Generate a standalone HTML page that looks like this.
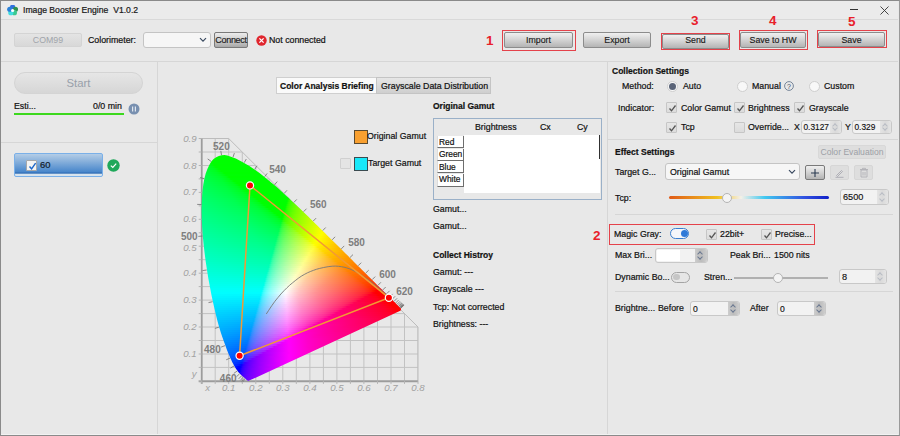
<!DOCTYPE html>
<html><head><meta charset="utf-8">
<style>
*{box-sizing:border-box;margin:0;padding:0}
html,body{width:900px;height:436px;overflow:hidden;background:#e8e8e8;font-family:"Liberation Sans",sans-serif;color:#1e1e1e}
.a{position:absolute}
.t{position:absolute;font-size:8.8px;line-height:12px;white-space:nowrap;color:#111;-webkit-text-stroke:0.2px #111}
.b{font-weight:bold;font-size:8.5px}
.btn{position:absolute;border:1px solid #8c8c8c;border-radius:2px;background:linear-gradient(#f0f0f0,#d6d6d6 45%,#b4b4b4);text-align:center;font-size:8.8px;line-height:14px;color:#1a1a1a;-webkit-text-stroke:0.15px #1a1a1a}
.red{position:absolute;border:1px solid #e4424a}
.num{position:absolute;color:#e8202a;font-weight:bold;font-size:13.5px;line-height:12px}
.cb{position:absolute;width:11px;height:11px;border:1px solid #c6c6c6;border-radius:1px;background:linear-gradient(#e6e6e6,#dcdcdc)}
.cb svg{position:absolute;left:1px;top:1px}
.rad{position:absolute;width:11px;height:11px;border-radius:50%;border:1px solid #cfcfcf;background:#f8f8f8}
.spin{position:absolute;border:1px solid #c8c8c8;border-radius:3px;background:#f2f2f2;font-size:8.6px;line-height:13px;padding-left:2px;color:#111;-webkit-text-stroke:0.15px #111}
.spin i{position:absolute;right:0;top:0;bottom:0;width:11px;background:linear-gradient(90deg,#cdcdcd,#bcbcbc 50%,#cdcdcd);border-radius:0 2px 2px 0}
.spin i:before,.spin i:after{content:"";position:absolute;left:3px;width:3px;height:3px;border:solid #6a7890;border-width:1px 0 0 1px}
.spin i:before{top:3px;transform:rotate(45deg)}
.spin i:after{bottom:3px;transform:rotate(225deg)}
.spin.dis i{background:linear-gradient(90deg,#e4e4e4,#dadada 50%,#e4e4e4)}
.spin.dis i:before,.spin.dis i:after{border-color:#b8bcc4}
.sep{position:absolute;background:#d6d6d6}
</style></head><body>
<!-- window border -->
<div class="a" style="left:0;top:0;width:900px;height:436px;border:1px solid #8a8a8a;border-right-color:#9a9a9a"></div>
<div class="a" style="left:1px;top:1px;width:897px;height:18px;background:#ebebeb"></div>
<div class="sep" style="left:1px;top:19px;width:897px;height:1px;background:#d9d9d9"></div>
<!-- title icon -->
<svg class="a" style="left:7px;top:5px" width="11" height="11" viewBox="0 0 11 11"><circle cx="5.60" cy="2.20" r="2.6" fill="#2f6fe0"/><circle cx="8.45" cy="4.27" r="2.6" fill="#2e9050"/><circle cx="7.36" cy="7.63" r="2.6" fill="#3cc890"/><circle cx="3.84" cy="7.63" r="2.6" fill="#40dce0"/><circle cx="2.75" cy="4.27" r="2.6" fill="#2a80d8"/><circle cx="5.6" cy="5.5" r="1.6" fill="#fff"/></svg>
<div class="t" style="left:23px;top:4px;font-size:8.65px;color:#222">Image Booster Engine&nbsp;&nbsp;V1.0.2</div>
<!-- window controls -->
<div class="a" style="left:850px;top:9px;width:8px;height:1.2px;background:#333"></div>
<svg class="a" style="left:880px;top:6px" width="9" height="9" viewBox="0 0 9 9"><path d="M0.5 0.5L8.5 8.5M8.5 0.5L0.5 8.5" stroke="#333" stroke-width="0.9"/></svg>

<!-- toolbar -->
<div class="a" style="left:14px;top:33px;width:68px;height:14px;border-radius:2px;background:linear-gradient(#e4e4e4,#d8d8d8);border:1px solid #d4d4d4;color:#a0a4aa;font-size:8.8px;line-height:12px;text-align:center">COM99</div>
<div class="t" style="left:88px;top:34px">Colorimeter:</div>
<div class="a" style="left:143px;top:32px;width:68px;height:16px;border:1px solid #c4c4c4;border-radius:3px;background:#f6f6f6"></div>
<svg class="a" style="left:199px;top:37px" width="8" height="6" viewBox="0 0 8 6"><path d="M1 1.2L4 4.2L7 1.2" stroke="#3a4a60" stroke-width="1.2" fill="none"/></svg>
<div class="btn" style="left:214px;top:32px;width:34px;height:16px;line-height:14px;font-size:9px;letter-spacing:-0.3px;border-color:#7a7a7a;background:linear-gradient(#ececec,#c8c8c8 60%,#a8a8a8)">Connect</div>
<svg class="a" style="left:256px;top:35px" width="11" height="11" viewBox="0 0 11 11"><circle cx="5.5" cy="5.5" r="5.2" fill="#e0262e"/><path d="M3.4 3.4L7.6 7.6M7.6 3.4L3.4 7.6" stroke="#fff" stroke-width="1.3"/></svg>
<div class="t" style="left:269px;top:34px">Not connected</div>

<div class="num" style="left:486px;top:35px">1</div>
<div class="red" style="left:502px;top:30px;width:74px;height:21px"></div>
<div class="btn" style="left:504px;top:32px;width:69px;height:16px">Import</div>
<div class="btn" style="left:583px;top:32px;width:68px;height:16px">Export</div>
<div class="num" style="left:691px;top:15px">3</div>
<div class="btn" style="left:662px;top:34px;width:67px;height:15px;line-height:11px">Send</div>
<div class="red" style="left:661px;top:33px;width:69px;height:17px"></div>
<div class="num" style="left:769px;top:15px">4</div>
<div class="btn" style="left:740px;top:32px;width:66px;height:16px">Save to HW</div>
<div class="red" style="left:739px;top:30px;width:69px;height:20px"></div>
<div class="num" style="left:848px;top:16px">5</div>
<div class="btn" style="left:818px;top:32px;width:67px;height:15px">Save</div>
<div class="red" style="left:817px;top:30px;width:70px;height:18px"></div>

<div class="sep" style="left:1px;top:61px;width:897px;height:1px"></div>
<div class="sep" style="left:157px;top:62px;width:1px;height:373px"></div>
<div class="sep" style="left:607px;top:62px;width:1px;height:373px"></div>
<div class="a" style="left:1px;top:434px;width:897px;height:1px;background:#f2f2f2"></div>

<!-- left panel -->
<div class="a" style="left:14px;top:72px;width:129px;height:22px;border-radius:11px;border:1px solid #d4d4d4;background:linear-gradient(#e6e6e6,#d6d6d6);color:#98a0aa;font-size:11.3px;line-height:20px;text-align:center">Start</div>
<div class="t" style="left:14px;top:100px">Esti...</div>
<div class="t" style="left:93px;top:100px">0/0 min</div>
<div class="a" style="left:14px;top:113px;width:110px;height:2px;background:#3cd81e"></div>
<svg class="a" style="left:128px;top:103px" width="12" height="12" viewBox="0 0 12 12"><circle cx="6" cy="6" r="5.5" fill="#7890b0"/><path d="M4.6 3.6V8.4M7.4 3.6V8.4" stroke="#dfe6ee" stroke-width="1.2"/></svg>
<div class="sep" style="left:1px;top:142px;width:156px;height:1px"></div>
<div class="a" style="left:14px;top:153px;width:89px;height:24px;border:1px solid #7ab0e8;border-radius:2px;background:linear-gradient(#b4cde6,#4a88cc 80%,#2c6ab4 88%,#d8e4ee 90%)"></div>
<div class="cb" style="left:26px;top:160px;width:11px;height:11px;background:#f4f4f4;border-color:#a8a8a8"><svg width="9" height="9" viewBox="0 0 9 9"><path d="M1.5 4.5L3.6 6.8L7.6 1.2" stroke="#1c66c8" stroke-width="1.4" fill="none"/></svg></div>
<div class="t" style="left:40px;top:159px;font-size:9.4px;color:#102030">60</div>
<svg class="a" style="left:107px;top:159px" width="13" height="13" viewBox="0 0 13 13"><circle cx="6.5" cy="6.5" r="6.2" fill="#1fa85a"/><path d="M3.8 6.6L5.8 8.5L9.2 4.6" stroke="#fff" stroke-width="1.2" fill="none"/></svg>

<!-- tabs -->
<div class="a" style="left:276px;top:77px;width:101px;height:17px;background:#fafafa;border:1px solid #cfcfcf"></div>
<div class="t b" style="left:280px;top:80px">Color Analysis Briefing</div>
<div class="a" style="left:376px;top:77px;width:115px;height:17px;background:linear-gradient(#e6e6e6,#cfcfcf);border:1px solid #c4c4c4"></div>
<div class="t" style="left:381px;top:80px">Grayscale Data Distribution</div>

<!-- legend -->
<div class="a" style="left:354px;top:130px;width:14px;height:14px;background:#f9a030;border:1px solid #5a4a30"></div>
<div class="t" style="left:367px;top:130px">Original Gamut</div>
<div class="cb" style="left:340px;top:158px;width:11px;height:11px;border-color:#d0d0d0;background:#e4e4e4"></div>
<div class="a" style="left:354px;top:157px;width:14px;height:14px;background:#18e8f8;border:1px solid #3a4a50"></div>
<div class="t" style="left:368px;top:157px">Target Gamut</div>

<!-- original gamut table -->
<div class="t b" style="left:433px;top:100px">Original Gamut</div>
<div class="a" style="left:433px;top:118px;width:169px;height:82px;border:1px solid #9ab0c8;background:#e8e8e8"></div>
<div class="t" style="left:475px;top:121px">Brightness</div>
<div class="t" style="left:540px;top:121px">Cx</div>
<div class="t" style="left:577px;top:121px">Cy</div>
<div class="a" style="left:464px;top:135px;width:136px;height:58px;background:#fff"></div>
<div class="a" style="left:599px;top:135px;width:1px;height:24px;background:#303030"></div>
<div class="a" style="left:437px;top:136px;width:27px;height:12px;background:#fff;border:1px solid #dcdcdc;border-bottom-color:#6e6e6e;border-right-color:#6e6e6e;border-top:0"></div>
<div class="a" style="left:437px;top:148.5px;width:27px;height:12px;background:#fff;border:1px solid #dcdcdc;border-bottom-color:#6e6e6e;border-right-color:#6e6e6e;border-top:0"></div>
<div class="a" style="left:437px;top:161px;width:27px;height:12px;background:#fff;border:1px solid #dcdcdc;border-bottom-color:#6e6e6e;border-right-color:#6e6e6e;border-top:0"></div>
<div class="a" style="left:437px;top:174px;width:27px;height:12.5px;background:#fff;border:1px solid #dcdcdc;border-bottom-color:#6e6e6e;border-right-color:#6e6e6e;border-top:0"></div>
<div class="t" style="left:439px;top:136px;font-size:8.4px">Red</div>
<div class="t" style="left:439px;top:148px;font-size:8.4px">Green</div>
<div class="t" style="left:439px;top:161px;font-size:8.4px">Blue</div>
<div class="t" style="left:439px;top:173px;font-size:8.4px">White</div>

<div class="t" style="left:433px;top:203px">Gamut...</div>
<div class="t" style="left:433px;top:220px">Gamut...</div>
<div class="t b" style="left:433px;top:249px">Collect Histroy</div>
<div class="t" style="left:433px;top:266px">Gamut: ---</div>
<div class="t" style="left:433px;top:283px">Grayscale ---</div>
<div class="t" style="left:433px;top:301px">Tcp: Not corrected</div>
<div class="t" style="left:433px;top:318px">Brightness: ---</div>
<div class="num" style="left:593px;top:230px">2</div>

<!-- right panel: collection settings -->
<div class="t b" style="left:612px;top:65px">Collection Settings</div>
<div class="t" style="left:622px;top:80px">Method:</div>
<div class="rad" style="left:667px;top:81px"></div><div class="a" style="left:669px;top:83px;width:7px;height:7px;border-radius:50%;background:#5a6478"></div>
<div class="t" style="left:683px;top:80px">Auto</div>
<div class="rad" style="left:737px;top:81px"></div>
<div class="t" style="left:752px;top:80px">Manual</div>
<svg class="a" style="left:784px;top:81px" width="10" height="10" viewBox="0 0 10 10"><circle cx="5" cy="5" r="4.4" fill="none" stroke="#6a7a90" stroke-width="0.9"/><text x="5" y="7.6" font-size="7" text-anchor="middle" fill="#3a4a60" font-family="Liberation Sans">?</text></svg>
<div class="rad" style="left:809px;top:81px"></div>
<div class="t" style="left:824px;top:80px">Custom</div>

<div class="t" style="left:618px;top:102px">Indicator:</div>
<div class="cb" style="left:666px;top:102px"><svg width="9" height="9" viewBox="0 0 9 9"><path d="M1.5 4.5L3.5 6.8L7.5 1.5" stroke="#555" stroke-width="1.3" fill="none"/></svg></div>
<div class="t" style="left:681px;top:102px">Color Gamut</div>
<div class="cb" style="left:734px;top:102px"><svg width="9" height="9" viewBox="0 0 9 9"><path d="M1.5 4.5L3.5 6.8L7.5 1.5" stroke="#555" stroke-width="1.3" fill="none"/></svg></div>
<div class="t" style="left:748px;top:102px">Brightness</div>
<div class="cb" style="left:794px;top:102px"><svg width="9" height="9" viewBox="0 0 9 9"><path d="M1.5 4.5L3.5 6.8L7.5 1.5" stroke="#555" stroke-width="1.3" fill="none"/></svg></div>
<div class="t" style="left:809px;top:102px">Grayscale</div>
<div class="cb" style="left:666px;top:122px"><svg width="9" height="9" viewBox="0 0 9 9"><path d="M1.5 4.5L3.5 6.8L7.5 1.5" stroke="#555" stroke-width="1.3" fill="none"/></svg></div>
<div class="t" style="left:681px;top:121px">Tcp</div>
<div class="cb" style="left:734px;top:122px"></div>
<div class="t" style="left:748px;top:121px">Override...</div>
<div class="t" style="left:794px;top:121px">X</div>
<div class="spin dis" style="left:801px;top:120px;width:41px;height:14px;font-size:8.3px;padding-left:1.5px">0.3127<i></i></div>
<div class="t" style="left:845px;top:121px">Y</div>
<div class="spin dis" style="left:852px;top:120px;width:40px;height:14px;font-size:8.3px;padding-left:1.5px">0.329<i></i></div>
<div class="sep" style="left:608px;top:139px;width:290px;height:1px"></div>

<!-- effect settings -->
<div class="t b" style="left:615px;top:146px">Effect Settings</div>
<div class="a" style="left:818px;top:145px;width:68px;height:14px;border-radius:2px;background:#dedede;border:1px solid #d8d8d8;color:#9ca0a6;font-size:8.6px;line-height:12px;text-align:center">Color Evaluation</div>
<div class="t" style="left:615px;top:166px">Target G...</div>
<div class="a" style="left:665px;top:163px;width:135px;height:17px;border:1px solid #c4c4c4;border-radius:3px;background:#f6f6f6"></div>
<div class="t" style="left:670px;top:166px">Original Gamut</div>
<svg class="a" style="left:788px;top:169px" width="8" height="6" viewBox="0 0 8 6"><path d="M1 1.2L4 4.2L7 1.2" stroke="#3a4a60" stroke-width="1.2" fill="none"/></svg>
<div class="btn" style="left:805px;top:165px;width:20px;height:15px;border-color:#7a7a7a"></div>
<svg class="a" style="left:810px;top:168px" width="10" height="10" viewBox="0 0 10 10"><path d="M5 1V9M1 5H9" stroke="#2a3a50" stroke-width="1.1"/></svg>
<div class="a" style="left:830px;top:165px;width:19px;height:15px;border-radius:2px;background:#dedede;border:1px solid #d6d6d6"></div>
<svg class="a" style="left:834px;top:168px" width="11" height="10" viewBox="0 0 11 10"><path d="M2.5 7.5L7.5 2.5L8.5 3.5L3.5 8.5Z" fill="none" stroke="#a8a8b0" stroke-width="0.9"/><path d="M1.5 9.3H9.5" stroke="#a8a8b0" stroke-width="0.9"/></svg>
<div class="a" style="left:854px;top:165px;width:19px;height:15px;border-radius:2px;background:#dedede;border:1px solid #d6d6d6"></div>
<svg class="a" style="left:859px;top:167px" width="10" height="11" viewBox="0 0 10 11"><path d="M2 3H8V10H2Z M1 2.5H9 M3.5 2.5V1.3H6.5V2.5 M4 5V8.5M6 5V8.5" fill="none" stroke="#b0b0b6" stroke-width="0.9"/></svg>
<div class="t" style="left:615px;top:192px">Tcp:</div>
<div class="a" style="left:669px;top:196px;width:160px;height:3px;border-radius:2px;background:linear-gradient(90deg,#e05a18,#f0c020 30%,#f4f0e8 45%,#40c8f0 60%,#3050e0 85%,#1020c8)"></div>
<div class="a" style="left:722px;top:193px;width:10px;height:10px;border-radius:50%;background:#f4f4f4;border:1px solid #b4b4b4"></div>
<div class="spin dis" style="left:840px;top:189px;width:49px;height:16px;line-height:15px;font-size:9.2px">6500<i></i></div>
<div class="sep" style="left:615px;top:214px;width:278px;height:1px"></div>

<!-- magic gray -->
<div class="red" style="left:609px;top:224px;width:206px;height:21px"></div>
<div class="t" style="left:614px;top:228px">Magic Gray:</div>
<div class="a" style="left:670px;top:228px;width:19px;height:11px;border-radius:6px;border:1.5px solid #3a7fd0;background:#f4f6fa"></div>
<div class="a" style="left:680.5px;top:230px;width:7px;height:7px;border-radius:50%;background:#2f7ad8"></div>
<div class="cb" style="left:706px;top:229px"><svg width="9" height="9" viewBox="0 0 9 9"><path d="M1.5 4.5L3.5 6.8L7.5 1.5" stroke="#555" stroke-width="1.3" fill="none"/></svg></div>
<div class="t" style="left:720px;top:228px">22bit+</div>
<div class="cb" style="left:761px;top:229px"><svg width="9" height="9" viewBox="0 0 9 9"><path d="M1.5 4.5L3.5 6.8L7.5 1.5" stroke="#555" stroke-width="1.3" fill="none"/></svg></div>
<div class="t" style="left:775px;top:228px">Precise...</div>

<div class="t" style="left:615px;top:249px">Max Bri...</div>
<div class="spin" style="left:655px;top:248px;width:53px;height:15px;background:#f2f2f2"><i style="width:12px"></i></div>
<div class="a" style="left:657px;top:250px;width:23px;height:11px;background:#fff"></div>
<div class="t" style="left:730px;top:249px">Peak Bri...</div>
<div class="t" style="left:774px;top:249px">1500 nits</div>
<div class="t" style="left:615px;top:271px">Dynamic Bo...</div>
<div class="a" style="left:671px;top:271.5px;width:19px;height:11px;border-radius:6px;border:1.3px solid #a4a4a4;background:#e6e6e6"></div>
<div class="a" style="left:673.3px;top:273.5px;width:6.5px;height:6.5px;border-radius:50%;background:#c6c6c6"></div>
<div class="t" style="left:704px;top:271px">Stren...</div>
<div class="a" style="left:734px;top:277px;width:94px;height:2px;background:#b0b0b0"></div>
<div class="a" style="left:773px;top:273px;width:10px;height:10px;border-radius:50%;background:#f4f4f4;border:1px solid #b4b4b4"></div>
<div class="spin dis" style="left:839px;top:269px;width:48px;height:15px;line-height:14px;font-size:9.2px">8<i></i></div>
<div class="sep" style="left:615px;top:291px;width:278px;height:1px"></div>

<div class="t" style="left:615px;top:302px">Brightne...</div>
<div class="t" style="left:658px;top:302px">Before</div>
<div class="spin" style="left:690px;top:301px;width:50px;height:15px;line-height:14px">0<i></i></div>
<div class="t" style="left:750px;top:302px">After</div>
<div class="spin" style="left:777px;top:301px;width:49px;height:15px;line-height:14px">0<i></i></div>

<svg class="a" style="left:0;top:0" width="900" height="436" viewBox="0 0 900 436" font-family="Liberation Sans"><clipPath id="gclip"><path d="M201.7 380.9 L201.7 138.5 L228.7 138.5 L418 327 L418 380.9 Z"/></clipPath><g clip-path="url(#gclip)"><path d="M201.7 380.9V138.5M215.2 380.9V138.5M228.7 380.9V138.5M242.3 380.9V138.5M255.8 380.9V138.5M269.3 380.9V138.5M282.8 380.9V138.5M296.3 380.9V138.5M309.9 380.9V138.5M323.4 380.9V138.5M336.9 380.9V138.5M350.4 380.9V138.5M363.9 380.9V138.5M377.5 380.9V138.5M391 380.9V138.5M404.5 380.9V138.5M418 380.9V138.5M201.7 380.9H418M201.7 367.4H418M201.7 354H418M201.7 340.5H418M201.7 327H418M201.7 313.6H418M201.7 300.1H418M201.7 286.6H418M201.7 273.2H418M201.7 259.7H418M201.7 246.2H418M201.7 232.8H418M201.7 219.3H418M201.7 205.9H418M201.7 192.4H418M201.7 178.9H418M201.7 165.5H418M201.7 152H418M201.7 138.5H418" stroke="#c2c2c2" stroke-width="1" fill="none"/></g><path d="M201.7 380.9 L201.7 138.5 L228.7 138.5 L418 327 L418 380.9 Z" stroke="#bcbcbc" stroke-width="1" fill="none"/><path d="M201.7 383.9V138.5M198.7 381.4H418" stroke="#9c9c9c" stroke-width="1.7" fill="none"/><path d="M198.7 380.9H201.7M198.7 367.4H201.7M198.7 354H201.7M198.7 340.5H201.7M198.7 327H201.7M198.7 313.6H201.7M198.7 300.1H201.7M198.7 286.6H201.7M198.7 273.2H201.7M198.7 259.7H201.7M198.7 246.2H201.7M198.7 232.8H201.7M198.7 219.3H201.7M198.7 205.9H201.7M198.7 192.4H201.7M198.7 178.9H201.7M198.7 165.5H201.7M198.7 152H201.7M198.7 138.5H201.7M201.7 380.9V383.9M215.2 380.9V383.9M228.7 380.9V383.9M242.3 380.9V383.9M255.8 380.9V383.9M269.3 380.9V383.9M282.8 380.9V383.9M296.3 380.9V383.9M309.9 380.9V383.9M323.4 380.9V383.9M336.9 380.9V383.9M350.4 380.9V383.9M363.9 380.9V383.9M377.5 380.9V383.9M391 380.9V383.9M404.5 380.9V383.9M418 380.9V383.9" stroke="#b4b4b4" stroke-width="1" fill="none"/><g font-size="9.7" font-style="italic" fill="#a2a2a2"><text x="196.7" y="357" text-anchor="end">0.1</text><text x="196.7" y="330" text-anchor="end">0.2</text><text x="196.7" y="303.1" text-anchor="end">0.3</text><text x="196.7" y="276.2" text-anchor="end">0.4</text><text x="196.7" y="251.2" text-anchor="end">0.5</text><text x="196.7" y="222.3" text-anchor="end">0.6</text><text x="196.7" y="195.4" text-anchor="end">0.7</text><text x="196.7" y="168.5" text-anchor="end">0.8</text><text x="196.7" y="141.5" text-anchor="end">0.9</text><text x="196.7" y="376.9" text-anchor="end">y</text><text x="207.7" y="391.4" text-anchor="middle">x</text><text x="228.7" y="391.4" text-anchor="middle">0.1</text><text x="255.8" y="391.4" text-anchor="middle">0.2</text><text x="282.8" y="391.4" text-anchor="middle">0.3</text><text x="309.9" y="391.4" text-anchor="middle">0.4</text><text x="336.9" y="391.4" text-anchor="middle">0.5</text><text x="363.9" y="391.4" text-anchor="middle">0.6</text><text x="391" y="391.4" text-anchor="middle">0.7</text><text x="418" y="391.4" text-anchor="middle">0.8</text></g><defs><linearGradient id="r0" x1="216" x2="231" y1="0" y2="0" gradientUnits="userSpaceOnUse"><stop offset="0.000" stop-color="#00ff00"/><stop offset="1.000" stop-color="#00ff00"/></linearGradient><linearGradient id="r1" x1="213" x2="237" y1="0" y2="0" gradientUnits="userSpaceOnUse"><stop offset="0.000" stop-color="#00ff00"/><stop offset="1.000" stop-color="#00ff00"/></linearGradient><linearGradient id="r2" x1="210" x2="241" y1="0" y2="0" gradientUnits="userSpaceOnUse"><stop offset="0.000" stop-color="#00ff00"/><stop offset="1.000" stop-color="#00ff00"/></linearGradient><linearGradient id="r3" x1="209" x2="245" y1="0" y2="0" gradientUnits="userSpaceOnUse"><stop offset="0.000" stop-color="#00ff00"/><stop offset="1.000" stop-color="#00ff00"/></linearGradient><linearGradient id="r4" x1="207" x2="248" y1="0" y2="0" gradientUnits="userSpaceOnUse"><stop offset="0.000" stop-color="#00ff1a"/><stop offset="0.098" stop-color="#00ff01"/><stop offset="1.000" stop-color="#00ff00"/></linearGradient><linearGradient id="r5" x1="206" x2="252" y1="0" y2="0" gradientUnits="userSpaceOnUse"><stop offset="0.000" stop-color="#00ff25"/><stop offset="0.130" stop-color="#00ff0d"/><stop offset="0.174" stop-color="#00ff00"/><stop offset="1.000" stop-color="#00ff00"/></linearGradient><linearGradient id="r6" x1="205" x2="255" y1="0" y2="0" gradientUnits="userSpaceOnUse"><stop offset="0.000" stop-color="#00ff2e"/><stop offset="0.160" stop-color="#00ff16"/><stop offset="0.220" stop-color="#00ff01"/><stop offset="1.000" stop-color="#00ff00"/></linearGradient><linearGradient id="r7" x1="204" x2="258" y1="0" y2="0" gradientUnits="userSpaceOnUse"><stop offset="0.000" stop-color="#00ff36"/><stop offset="0.204" stop-color="#00ff19"/><stop offset="0.278" stop-color="#00ff00"/><stop offset="1.000" stop-color="#00ff00"/></linearGradient><linearGradient id="r8" x1="204" x2="260" y1="0" y2="0" gradientUnits="userSpaceOnUse"><stop offset="0.000" stop-color="#00ff3b"/><stop offset="0.214" stop-color="#00ff1f"/><stop offset="0.286" stop-color="#00ff0b"/><stop offset="0.304" stop-color="#00ff02"/><stop offset="1.000" stop-color="#00ff00"/></linearGradient><linearGradient id="r9" x1="203" x2="263" y1="0" y2="0" gradientUnits="userSpaceOnUse"><stop offset="0.000" stop-color="#00ff41"/><stop offset="0.233" stop-color="#00ff24"/><stop offset="0.317" stop-color="#00ff0f"/><stop offset="0.350" stop-color="#00ff00"/><stop offset="1.000" stop-color="#00ff00"/></linearGradient><linearGradient id="r10" x1="203" x2="266" y1="0" y2="0" gradientUnits="userSpaceOnUse"><stop offset="0.000" stop-color="#00ff45"/><stop offset="0.254" stop-color="#00ff26"/><stop offset="0.333" stop-color="#00ff12"/><stop offset="0.365" stop-color="#00ff03"/><stop offset="1.000" stop-color="#00ff00"/></linearGradient><linearGradient id="r11" x1="202" x2="268" y1="0" y2="0" gradientUnits="userSpaceOnUse"><stop offset="0.000" stop-color="#00ff4b"/><stop offset="0.273" stop-color="#00ff2b"/><stop offset="0.364" stop-color="#00ff16"/><stop offset="0.409" stop-color="#00ff00"/><stop offset="1.000" stop-color="#00ff00"/></linearGradient><linearGradient id="r12" x1="202" x2="271" y1="0" y2="0" gradientUnits="userSpaceOnUse"><stop offset="0.000" stop-color="#00ff4e"/><stop offset="0.275" stop-color="#00ff2f"/><stop offset="0.391" stop-color="#00ff13"/><stop offset="0.420" stop-color="#00ff03"/><stop offset="0.884" stop-color="#00ff00"/><stop offset="1.000" stop-color="#00ff00"/></linearGradient><linearGradient id="r13" x1="201" x2="273" y1="0" y2="0" gradientUnits="userSpaceOnUse"><stop offset="0.000" stop-color="#00ff53"/><stop offset="0.292" stop-color="#00ff33"/><stop offset="0.417" stop-color="#00ff16"/><stop offset="0.458" stop-color="#00ff00"/><stop offset="1.000" stop-color="#00ff00"/></linearGradient><linearGradient id="r14" x1="201" x2="276" y1="0" y2="0" gradientUnits="userSpaceOnUse"><stop offset="0.000" stop-color="#00ff57"/><stop offset="0.307" stop-color="#00ff35"/><stop offset="0.427" stop-color="#00ff19"/><stop offset="0.480" stop-color="#00ff00"/><stop offset="1.000" stop-color="#00ff00"/></linearGradient><linearGradient id="r15" x1="201" x2="278" y1="0" y2="0" gradientUnits="userSpaceOnUse"><stop offset="0.000" stop-color="#00ff5a"/><stop offset="0.312" stop-color="#00ff38"/><stop offset="0.442" stop-color="#00ff1c"/><stop offset="0.481" stop-color="#00ff09"/><stop offset="0.494" stop-color="#00ff00"/><stop offset="1.000" stop-color="#00ff00"/></linearGradient><linearGradient id="r16" x1="200" x2="280" y1="0" y2="0" gradientUnits="userSpaceOnUse"><stop offset="0.000" stop-color="#00ff5e"/><stop offset="0.325" stop-color="#00ff3c"/><stop offset="0.463" stop-color="#00ff1f"/><stop offset="0.500" stop-color="#00ff0e"/><stop offset="0.525" stop-color="#00ff00"/><stop offset="1.000" stop-color="#00ff00"/></linearGradient><linearGradient id="r17" x1="200" x2="282" y1="0" y2="0" gradientUnits="userSpaceOnUse"><stop offset="0.000" stop-color="#00ff61"/><stop offset="0.329" stop-color="#00ff3f"/><stop offset="0.476" stop-color="#00ff21"/><stop offset="0.524" stop-color="#00ff0a"/><stop offset="0.537" stop-color="#00ff00"/><stop offset="1.000" stop-color="#00ff00"/></linearGradient><linearGradient id="r18" x1="200" x2="285" y1="0" y2="0" gradientUnits="userSpaceOnUse"><stop offset="0.000" stop-color="#00ff64"/><stop offset="0.341" stop-color="#00ff41"/><stop offset="0.482" stop-color="#00ff23"/><stop offset="0.529" stop-color="#00ff0f"/><stop offset="0.553" stop-color="#00ff00"/><stop offset="1.000" stop-color="#00ff00"/></linearGradient><linearGradient id="r19" x1="200" x2="287" y1="0" y2="0" gradientUnits="userSpaceOnUse"><stop offset="0.000" stop-color="#00ff67"/><stop offset="0.345" stop-color="#00ff44"/><stop offset="0.494" stop-color="#00ff26"/><stop offset="0.540" stop-color="#00ff13"/><stop offset="0.563" stop-color="#00ff00"/><stop offset="1.000" stop-color="#00ff00"/></linearGradient><linearGradient id="r20" x1="200" x2="289" y1="0" y2="0" gradientUnits="userSpaceOnUse"><stop offset="0.000" stop-color="#00ff6a"/><stop offset="0.348" stop-color="#00ff47"/><stop offset="0.506" stop-color="#00ff28"/><stop offset="0.562" stop-color="#00ff10"/><stop offset="0.584" stop-color="#00ff00"/><stop offset="1.000" stop-color="#00ff00"/></linearGradient><linearGradient id="r21" x1="199" x2="291" y1="0" y2="0" gradientUnits="userSpaceOnUse"><stop offset="0.000" stop-color="#00ff6e"/><stop offset="0.359" stop-color="#00ff4a"/><stop offset="0.522" stop-color="#00ff2a"/><stop offset="0.576" stop-color="#00ff14"/><stop offset="0.598" stop-color="#00ff01"/><stop offset="0.967" stop-color="#00ff00"/><stop offset="0.989" stop-color="#28ff00"/><stop offset="1.000" stop-color="#35ff00"/></linearGradient><linearGradient id="r22" x1="199" x2="293" y1="0" y2="0" gradientUnits="userSpaceOnUse"><stop offset="0.000" stop-color="#00ff71"/><stop offset="0.362" stop-color="#00ff4e"/><stop offset="0.532" stop-color="#00ff2c"/><stop offset="0.596" stop-color="#00ff11"/><stop offset="0.617" stop-color="#00ff00"/><stop offset="0.947" stop-color="#01ff00"/><stop offset="0.957" stop-color="#20ff00"/><stop offset="0.979" stop-color="#3bff00"/><stop offset="1.000" stop-color="#4dff00"/></linearGradient><linearGradient id="r23" x1="199" x2="295" y1="0" y2="0" gradientUnits="userSpaceOnUse"><stop offset="0.000" stop-color="#00ff74"/><stop offset="0.365" stop-color="#00ff51"/><stop offset="0.531" stop-color="#00ff31"/><stop offset="0.604" stop-color="#00ff15"/><stop offset="0.625" stop-color="#00ff02"/><stop offset="0.917" stop-color="#00ff00"/><stop offset="0.938" stop-color="#2aff00"/><stop offset="0.969" stop-color="#4aff00"/><stop offset="1.000" stop-color="#5fff00"/></linearGradient><linearGradient id="r24" x1="199" x2="298" y1="0" y2="0" gradientUnits="userSpaceOnUse"><stop offset="0.000" stop-color="#00ff77"/><stop offset="0.364" stop-color="#00ff54"/><stop offset="0.535" stop-color="#00ff34"/><stop offset="0.606" stop-color="#00ff19"/><stop offset="0.636" stop-color="#00ff00"/><stop offset="0.879" stop-color="#00ff00"/><stop offset="0.889" stop-color="#06ff00"/><stop offset="0.899" stop-color="#23ff00"/><stop offset="0.919" stop-color="#3dff00"/><stop offset="0.970" stop-color="#63ff00"/><stop offset="1.000" stop-color="#73ff00"/></linearGradient><linearGradient id="r25" x1="199" x2="300" y1="0" y2="0" gradientUnits="userSpaceOnUse"><stop offset="0.000" stop-color="#00ff7a"/><stop offset="0.366" stop-color="#00ff56"/><stop offset="0.545" stop-color="#00ff36"/><stop offset="0.614" stop-color="#00ff1c"/><stop offset="0.644" stop-color="#00ff03"/><stop offset="0.861" stop-color="#00ff00"/><stop offset="0.871" stop-color="#1aff00"/><stop offset="0.891" stop-color="#39ff00"/><stop offset="0.941" stop-color="#61ff00"/><stop offset="1.000" stop-color="#80ff00"/></linearGradient><linearGradient id="r26" x1="199" x2="302" y1="0" y2="0" gradientUnits="userSpaceOnUse"><stop offset="0.000" stop-color="#00ff7c"/><stop offset="0.379" stop-color="#00ff58"/><stop offset="0.553" stop-color="#00ff38"/><stop offset="0.631" stop-color="#00ff1a"/><stop offset="0.660" stop-color="#00ff00"/><stop offset="0.835" stop-color="#00ff00"/><stop offset="0.845" stop-color="#0cff00"/><stop offset="0.854" stop-color="#26ff00"/><stop offset="0.883" stop-color="#48ff00"/><stop offset="0.951" stop-color="#75ff00"/><stop offset="1.000" stop-color="#8dff00"/></linearGradient><linearGradient id="r27" x1="199" x2="304" y1="0" y2="0" gradientUnits="userSpaceOnUse"><stop offset="0.000" stop-color="#00ff7f"/><stop offset="0.381" stop-color="#00ff5b"/><stop offset="0.562" stop-color="#00ff3a"/><stop offset="0.638" stop-color="#00ff1d"/><stop offset="0.657" stop-color="#00ff0f"/><stop offset="0.667" stop-color="#00ff03"/><stop offset="0.743" stop-color="#00ff00"/><stop offset="0.819" stop-color="#00ff00"/><stop offset="0.829" stop-color="#1dff00"/><stop offset="0.848" stop-color="#3bff00"/><stop offset="0.895" stop-color="#63ff00"/><stop offset="1.000" stop-color="#98ff00"/></linearGradient><linearGradient id="r28" x1="199" x2="306" y1="0" y2="0" gradientUnits="userSpaceOnUse"><stop offset="0.000" stop-color="#00ff82"/><stop offset="0.383" stop-color="#00ff5e"/><stop offset="0.570" stop-color="#00ff3c"/><stop offset="0.645" stop-color="#00ff21"/><stop offset="0.673" stop-color="#00ff0a"/><stop offset="0.682" stop-color="#00ff00"/><stop offset="0.794" stop-color="#00ff00"/><stop offset="0.813" stop-color="#28ff00"/><stop offset="0.841" stop-color="#4aff00"/><stop offset="0.907" stop-color="#77ff00"/><stop offset="1.000" stop-color="#a3ff00"/></linearGradient><linearGradient id="r29" x1="199" x2="308" y1="0" y2="0" gradientUnits="userSpaceOnUse"><stop offset="0.000" stop-color="#00ff85"/><stop offset="0.385" stop-color="#00ff61"/><stop offset="0.578" stop-color="#00ff3e"/><stop offset="0.651" stop-color="#00ff24"/><stop offset="0.679" stop-color="#00ff10"/><stop offset="0.688" stop-color="#00ff04"/><stop offset="0.716" stop-color="#00ff00"/><stop offset="0.780" stop-color="#00ff00"/><stop offset="0.789" stop-color="#20ff00"/><stop offset="0.807" stop-color="#3dff00"/><stop offset="0.853" stop-color="#65ff00"/><stop offset="0.954" stop-color="#9aff00"/><stop offset="1.000" stop-color="#aeff00"/></linearGradient><linearGradient id="r30" x1="199" x2="310" y1="0" y2="0" gradientUnits="userSpaceOnUse"><stop offset="0.000" stop-color="#00ff88"/><stop offset="0.387" stop-color="#00ff64"/><stop offset="0.577" stop-color="#00ff42"/><stop offset="0.658" stop-color="#00ff27"/><stop offset="0.685" stop-color="#00ff15"/><stop offset="0.703" stop-color="#00ff00"/><stop offset="0.757" stop-color="#00ff00"/><stop offset="0.775" stop-color="#2bff00"/><stop offset="0.802" stop-color="#4cff00"/><stop offset="0.865" stop-color="#7aff00"/><stop offset="1.000" stop-color="#b8ff00"/></linearGradient><linearGradient id="r31" x1="199" x2="312" y1="0" y2="0" gradientUnits="userSpaceOnUse"><stop offset="0.000" stop-color="#00ff8a"/><stop offset="0.389" stop-color="#00ff67"/><stop offset="0.584" stop-color="#00ff44"/><stop offset="0.673" stop-color="#00ff25"/><stop offset="0.699" stop-color="#00ff12"/><stop offset="0.708" stop-color="#00ff05"/><stop offset="0.726" stop-color="#00ff00"/><stop offset="0.743" stop-color="#02ff00"/><stop offset="0.752" stop-color="#23ff00"/><stop offset="0.770" stop-color="#3fff00"/><stop offset="0.814" stop-color="#67ff00"/><stop offset="0.912" stop-color="#9dff00"/><stop offset="1.000" stop-color="#c2ff00"/></linearGradient><linearGradient id="r32" x1="199" x2="314" y1="0" y2="0" gradientUnits="userSpaceOnUse"><stop offset="0.000" stop-color="#00ff8d"/><stop offset="0.391" stop-color="#00ff69"/><stop offset="0.591" stop-color="#00ff46"/><stop offset="0.678" stop-color="#00ff28"/><stop offset="0.704" stop-color="#00ff17"/><stop offset="0.722" stop-color="#00ff00"/><stop offset="0.739" stop-color="#2dff00"/><stop offset="0.765" stop-color="#4eff00"/><stop offset="0.826" stop-color="#7cff00"/><stop offset="0.957" stop-color="#bbff00"/><stop offset="1.000" stop-color="#ccff00"/></linearGradient><linearGradient id="r33" x1="199" x2="316" y1="0" y2="0" gradientUnits="userSpaceOnUse"><stop offset="0.000" stop-color="#00ff90"/><stop offset="0.393" stop-color="#00ff6c"/><stop offset="0.598" stop-color="#00ff48"/><stop offset="0.684" stop-color="#00ff2b"/><stop offset="0.701" stop-color="#00ff21"/><stop offset="0.709" stop-color="#08ff1b"/><stop offset="0.718" stop-color="#26ff13"/><stop offset="0.735" stop-color="#41ff00"/><stop offset="0.778" stop-color="#69ff00"/><stop offset="0.872" stop-color="#a0ff00"/><stop offset="1.000" stop-color="#d6ff00"/></linearGradient><linearGradient id="r34" x1="199" x2="318" y1="0" y2="0" gradientUnits="userSpaceOnUse"><stop offset="0.000" stop-color="#00ff92"/><stop offset="0.395" stop-color="#00ff6f"/><stop offset="0.597" stop-color="#00ff4c"/><stop offset="0.689" stop-color="#00ff2e"/><stop offset="0.697" stop-color="#1dff29"/><stop offset="0.714" stop-color="#3dff1f"/><stop offset="0.731" stop-color="#51ff0e"/><stop offset="0.739" stop-color="#59ff00"/><stop offset="0.807" stop-color="#88ff00"/><stop offset="0.950" stop-color="#ccff00"/><stop offset="1.000" stop-color="#e0ff00"/></linearGradient><linearGradient id="r35" x1="200" x2="320" y1="0" y2="0" gradientUnits="userSpaceOnUse"><stop offset="0.000" stop-color="#00ff95"/><stop offset="0.392" stop-color="#00ff72"/><stop offset="0.600" stop-color="#00ff4f"/><stop offset="0.667" stop-color="#00ff3b"/><stop offset="0.675" stop-color="#0eff38"/><stop offset="0.683" stop-color="#29ff34"/><stop offset="0.708" stop-color="#4dff28"/><stop offset="0.733" stop-color="#65ff14"/><stop offset="0.750" stop-color="#71ff00"/><stop offset="0.850" stop-color="#abff00"/><stop offset="1.000" stop-color="#eaff00"/></linearGradient><linearGradient id="r36" x1="200" x2="322" y1="0" y2="0" gradientUnits="userSpaceOnUse"><stop offset="0.000" stop-color="#00ff97"/><stop offset="0.393" stop-color="#00ff75"/><stop offset="0.607" stop-color="#00ff51"/><stop offset="0.656" stop-color="#00ff43"/><stop offset="0.664" stop-color="#20ff40"/><stop offset="0.680" stop-color="#3fff3a"/><stop offset="0.721" stop-color="#69ff26"/><stop offset="0.746" stop-color="#7bff10"/><stop offset="0.754" stop-color="#81ff01"/><stop offset="0.877" stop-color="#c1ff00"/><stop offset="1.000" stop-color="#f4ff00"/></linearGradient><linearGradient id="r37" x1="200" x2="324" y1="0" y2="0" gradientUnits="userSpaceOnUse"><stop offset="0.000" stop-color="#00ff9a"/><stop offset="0.395" stop-color="#00ff78"/><stop offset="0.605" stop-color="#00ff55"/><stop offset="0.637" stop-color="#00ff4d"/><stop offset="0.653" stop-color="#2bff48"/><stop offset="0.677" stop-color="#4fff40"/><stop offset="0.734" stop-color="#7fff24"/><stop offset="0.750" stop-color="#8aff16"/><stop offset="0.766" stop-color="#93ff00"/><stop offset="0.919" stop-color="#ddff00"/><stop offset="1.000" stop-color="#feff00"/></linearGradient><linearGradient id="r38" x1="200" x2="326" y1="0" y2="0" gradientUnits="userSpaceOnUse"><stop offset="0.000" stop-color="#00ff9d"/><stop offset="0.397" stop-color="#00ff7b"/><stop offset="0.611" stop-color="#00ff57"/><stop offset="0.627" stop-color="#00ff53"/><stop offset="0.635" stop-color="#23ff51"/><stop offset="0.651" stop-color="#41ff4d"/><stop offset="0.690" stop-color="#6bff3f"/><stop offset="0.746" stop-color="#92ff22"/><stop offset="0.762" stop-color="#9cff11"/><stop offset="0.770" stop-color="#a0ff02"/><stop offset="0.944" stop-color="#f2ff00"/><stop offset="0.984" stop-color="#fffc00"/><stop offset="1.000" stop-color="#fff600"/></linearGradient><linearGradient id="r39" x1="200" x2="328" y1="0" y2="0" gradientUnits="userSpaceOnUse"><stop offset="0.000" stop-color="#00ffa0"/><stop offset="0.398" stop-color="#00ff7e"/><stop offset="0.609" stop-color="#00ff5b"/><stop offset="0.625" stop-color="#2eff57"/><stop offset="0.648" stop-color="#52ff51"/><stop offset="0.703" stop-color="#82ff3f"/><stop offset="0.750" stop-color="#9fff26"/><stop offset="0.766" stop-color="#a8ff17"/><stop offset="0.781" stop-color="#b1ff00"/><stop offset="0.953" stop-color="#fffe00"/><stop offset="1.000" stop-color="#ffec00"/></linearGradient><linearGradient id="r40" x1="200" x2="330" y1="0" y2="0" gradientUnits="userSpaceOnUse"><stop offset="0.000" stop-color="#00ffa3"/><stop offset="0.400" stop-color="#00ff81"/><stop offset="0.592" stop-color="#00ff63"/><stop offset="0.600" stop-color="#03ff61"/><stop offset="0.608" stop-color="#26ff5f"/><stop offset="0.623" stop-color="#44ff5c"/><stop offset="0.662" stop-color="#6eff51"/><stop offset="0.738" stop-color="#a3ff33"/><stop offset="0.769" stop-color="#b4ff1d"/><stop offset="0.777" stop-color="#b8ff13"/><stop offset="0.785" stop-color="#bcff03"/><stop offset="0.931" stop-color="#fffe00"/><stop offset="1.000" stop-color="#ffe300"/></linearGradient><linearGradient id="r41" x1="200" x2="332" y1="0" y2="0" gradientUnits="userSpaceOnUse"><stop offset="0.000" stop-color="#00ffa5"/><stop offset="0.402" stop-color="#00ff84"/><stop offset="0.583" stop-color="#00ff68"/><stop offset="0.591" stop-color="#1cff67"/><stop offset="0.598" stop-color="#31ff65"/><stop offset="0.621" stop-color="#54ff60"/><stop offset="0.674" stop-color="#84ff52"/><stop offset="0.750" stop-color="#b4ff32"/><stop offset="0.780" stop-color="#c4ff19"/><stop offset="0.795" stop-color="#ccff00"/><stop offset="0.909" stop-color="#fffd00"/><stop offset="1.000" stop-color="#ffdb00"/></linearGradient><linearGradient id="r42" x1="201" x2="334" y1="0" y2="0" gradientUnits="userSpaceOnUse"><stop offset="0.000" stop-color="#00ffa8"/><stop offset="0.406" stop-color="#00ff86"/><stop offset="0.564" stop-color="#00ff6f"/><stop offset="0.571" stop-color="#0bff6d"/><stop offset="0.579" stop-color="#29ff6c"/><stop offset="0.594" stop-color="#46ff69"/><stop offset="0.632" stop-color="#70ff61"/><stop offset="0.714" stop-color="#abff47"/><stop offset="0.767" stop-color="#c8ff2c"/><stop offset="0.789" stop-color="#d3ff15"/><stop offset="0.797" stop-color="#d7ff04"/><stop offset="0.820" stop-color="#e2ff00"/><stop offset="0.887" stop-color="#fffc00"/><stop offset="1.000" stop-color="#ffd200"/></linearGradient><linearGradient id="r43" x1="201" x2="336" y1="0" y2="0" gradientUnits="userSpaceOnUse"><stop offset="0.000" stop-color="#00ffab"/><stop offset="0.407" stop-color="#00ff89"/><stop offset="0.556" stop-color="#00ff74"/><stop offset="0.563" stop-color="#20ff73"/><stop offset="0.578" stop-color="#41ff70"/><stop offset="0.607" stop-color="#67ff6a"/><stop offset="0.674" stop-color="#9cff59"/><stop offset="0.756" stop-color="#ccff39"/><stop offset="0.793" stop-color="#dfff1b"/><stop offset="0.807" stop-color="#e6ff00"/><stop offset="0.859" stop-color="#ffff00"/><stop offset="1.000" stop-color="#ffcb00"/></linearGradient><linearGradient id="r44" x1="201" x2="338" y1="0" y2="0" gradientUnits="userSpaceOnUse"><stop offset="0.000" stop-color="#00ffad"/><stop offset="0.409" stop-color="#00ff8d"/><stop offset="0.540" stop-color="#00ff7a"/><stop offset="0.547" stop-color="#11ff79"/><stop offset="0.555" stop-color="#2cff78"/><stop offset="0.569" stop-color="#49ff75"/><stop offset="0.606" stop-color="#73ff6e"/><stop offset="0.686" stop-color="#aeff5a"/><stop offset="0.766" stop-color="#dbff38"/><stop offset="0.796" stop-color="#eaff20"/><stop offset="0.803" stop-color="#eeff16"/><stop offset="0.810" stop-color="#f2ff06"/><stop offset="0.825" stop-color="#f9ff00"/><stop offset="0.854" stop-color="#fff700"/><stop offset="1.000" stop-color="#ffc300"/></linearGradient><linearGradient id="r45" x1="201" x2="340" y1="0" y2="0" gradientUnits="userSpaceOnUse"><stop offset="0.000" stop-color="#00ffb0"/><stop offset="0.410" stop-color="#00ff90"/><stop offset="0.532" stop-color="#00ff7f"/><stop offset="0.540" stop-color="#23ff7e"/><stop offset="0.554" stop-color="#44ff7c"/><stop offset="0.590" stop-color="#71ff75"/><stop offset="0.662" stop-color="#a9ff65"/><stop offset="0.755" stop-color="#dfff43"/><stop offset="0.799" stop-color="#f6ff25"/><stop offset="0.813" stop-color="#fdff11"/><stop offset="0.820" stop-color="#fffd00"/><stop offset="0.950" stop-color="#ffca00"/><stop offset="1.000" stop-color="#ffbc00"/></linearGradient><linearGradient id="r46" x1="201" x2="342" y1="0" y2="0" gradientUnits="userSpaceOnUse"><stop offset="0.000" stop-color="#00ffb3"/><stop offset="0.411" stop-color="#00ff93"/><stop offset="0.518" stop-color="#00ff85"/><stop offset="0.532" stop-color="#2fff83"/><stop offset="0.553" stop-color="#55ff80"/><stop offset="0.596" stop-color="#82ff78"/><stop offset="0.688" stop-color="#c3ff62"/><stop offset="0.773" stop-color="#f3ff3f"/><stop offset="0.801" stop-color="#fffc29"/><stop offset="0.816" stop-color="#fff517"/><stop offset="0.823" stop-color="#fff207"/><stop offset="0.830" stop-color="#ffef00"/><stop offset="0.979" stop-color="#ffba00"/><stop offset="1.000" stop-color="#ffb400"/></linearGradient><linearGradient id="r47" x1="202" x2="344" y1="0" y2="0" gradientUnits="userSpaceOnUse"><stop offset="0.000" stop-color="#00ffb6"/><stop offset="0.408" stop-color="#00ff97"/><stop offset="0.507" stop-color="#00ff8a"/><stop offset="0.514" stop-color="#27ff89"/><stop offset="0.528" stop-color="#47ff87"/><stop offset="0.563" stop-color="#73ff81"/><stop offset="0.634" stop-color="#acff73"/><stop offset="0.746" stop-color="#f0ff50"/><stop offset="0.782" stop-color="#fffc3d"/><stop offset="0.817" stop-color="#ffeb1c"/><stop offset="0.831" stop-color="#ffe500"/><stop offset="0.986" stop-color="#ffb100"/><stop offset="1.000" stop-color="#ffad00"/></linearGradient><linearGradient id="r48" x1="202" x2="346" y1="0" y2="0" gradientUnits="userSpaceOnUse"><stop offset="0.000" stop-color="#00ffb9"/><stop offset="0.410" stop-color="#00ff9a"/><stop offset="0.493" stop-color="#00ff90"/><stop offset="0.507" stop-color="#32ff8e"/><stop offset="0.528" stop-color="#58ff8b"/><stop offset="0.569" stop-color="#85ff84"/><stop offset="0.660" stop-color="#c7ff71"/><stop offset="0.757" stop-color="#fffe50"/><stop offset="0.812" stop-color="#ffe427"/><stop offset="0.826" stop-color="#ffde16"/><stop offset="0.833" stop-color="#ffdb07"/><stop offset="0.840" stop-color="#ffd800"/><stop offset="1.000" stop-color="#ffa700"/></linearGradient><linearGradient id="r49" x1="202" x2="349" y1="0" y2="0" gradientUnits="userSpaceOnUse"><stop offset="0.000" stop-color="#00ffbc"/><stop offset="0.408" stop-color="#00ff9e"/><stop offset="0.476" stop-color="#00ff95"/><stop offset="0.483" stop-color="#05ff94"/><stop offset="0.490" stop-color="#2aff94"/><stop offset="0.503" stop-color="#49ff92"/><stop offset="0.537" stop-color="#76ff8d"/><stop offset="0.605" stop-color="#b0ff80"/><stop offset="0.728" stop-color="#fdff5f"/><stop offset="0.803" stop-color="#ffdd2f"/><stop offset="0.823" stop-color="#ffd41a"/><stop offset="0.837" stop-color="#ffcf00"/><stop offset="1.000" stop-color="#ff9e00"/></linearGradient><linearGradient id="r50" x1="202" x2="351" y1="0" y2="0" gradientUnits="userSpaceOnUse"><stop offset="0.000" stop-color="#00ffbf"/><stop offset="0.409" stop-color="#00ffa1"/><stop offset="0.470" stop-color="#00ff9a"/><stop offset="0.477" stop-color="#1fff99"/><stop offset="0.483" stop-color="#35ff98"/><stop offset="0.503" stop-color="#5bff96"/><stop offset="0.550" stop-color="#8fff8f"/><stop offset="0.644" stop-color="#d4ff7c"/><stop offset="0.718" stop-color="#fffd67"/><stop offset="0.812" stop-color="#ffd02a"/><stop offset="0.832" stop-color="#ffc914"/><stop offset="0.839" stop-color="#ffc607"/><stop offset="0.846" stop-color="#ffc400"/><stop offset="1.000" stop-color="#ff9800"/></linearGradient><linearGradient id="r51" x1="203" x2="353" y1="0" y2="0" gradientUnits="userSpaceOnUse"><stop offset="0.000" stop-color="#00ffc1"/><stop offset="0.413" stop-color="#00ffa4"/><stop offset="0.453" stop-color="#00ffa0"/><stop offset="0.460" stop-color="#0dff9f"/><stop offset="0.467" stop-color="#2dff9e"/><stop offset="0.480" stop-color="#4cff9c"/><stop offset="0.513" stop-color="#79ff98"/><stop offset="0.580" stop-color="#b4ff8d"/><stop offset="0.693" stop-color="#feff74"/><stop offset="0.807" stop-color="#ffca31"/><stop offset="0.833" stop-color="#ffc018"/><stop offset="0.847" stop-color="#ffbc00"/><stop offset="1.000" stop-color="#ff9100"/></linearGradient><linearGradient id="r52" x1="203" x2="355" y1="0" y2="0" gradientUnits="userSpaceOnUse"><stop offset="0.000" stop-color="#00ffc4"/><stop offset="0.414" stop-color="#00ffa8"/><stop offset="0.447" stop-color="#00ffa4"/><stop offset="0.454" stop-color="#23ffa4"/><stop offset="0.461" stop-color="#38ffa3"/><stop offset="0.480" stop-color="#5effa0"/><stop offset="0.526" stop-color="#92ff9a"/><stop offset="0.618" stop-color="#d9ff8a"/><stop offset="0.678" stop-color="#ffff7d"/><stop offset="0.783" stop-color="#ffcb43"/><stop offset="0.836" stop-color="#ffb81c"/><stop offset="0.855" stop-color="#ffb200"/><stop offset="1.000" stop-color="#ff8b00"/></linearGradient><linearGradient id="r53" x1="203" x2="357" y1="0" y2="0" gradientUnits="userSpaceOnUse"><stop offset="0.000" stop-color="#00ffc7"/><stop offset="0.416" stop-color="#00ffac"/><stop offset="0.435" stop-color="#00ffaa"/><stop offset="0.442" stop-color="#14ffa9"/><stop offset="0.448" stop-color="#31ffa8"/><stop offset="0.461" stop-color="#4fffa7"/><stop offset="0.494" stop-color="#7cffa3"/><stop offset="0.565" stop-color="#bdff99"/><stop offset="0.662" stop-color="#fffe85"/><stop offset="0.766" stop-color="#ffca4d"/><stop offset="0.831" stop-color="#ffb224"/><stop offset="0.851" stop-color="#ffac0e"/><stop offset="0.857" stop-color="#ffaa00"/><stop offset="1.000" stop-color="#ff8400"/></linearGradient><linearGradient id="r54" x1="203" x2="359" y1="0" y2="0" gradientUnits="userSpaceOnUse"><stop offset="0.000" stop-color="#00ffcb"/><stop offset="0.423" stop-color="#00ffaf"/><stop offset="0.429" stop-color="#00ffae"/><stop offset="0.436" stop-color="#27ffae"/><stop offset="0.449" stop-color="#4affac"/><stop offset="0.474" stop-color="#72ffaa"/><stop offset="0.532" stop-color="#adffa2"/><stop offset="0.641" stop-color="#fdff8f"/><stop offset="0.763" stop-color="#ffc350"/><stop offset="0.833" stop-color="#ffab26"/><stop offset="0.853" stop-color="#ffa513"/><stop offset="0.865" stop-color="#ffa100"/><stop offset="1.000" stop-color="#ff7e00"/></linearGradient><linearGradient id="r55" x1="204" x2="361" y1="0" y2="0" gradientUnits="userSpaceOnUse"><stop offset="0.000" stop-color="#00ffce"/><stop offset="0.414" stop-color="#00ffb4"/><stop offset="0.427" stop-color="#34ffb3"/><stop offset="0.446" stop-color="#5dffb1"/><stop offset="0.484" stop-color="#8effac"/><stop offset="0.567" stop-color="#d5ffa1"/><stop offset="0.631" stop-color="#fffc94"/><stop offset="0.726" stop-color="#ffca62"/><stop offset="0.834" stop-color="#ffa328"/><stop offset="0.860" stop-color="#ff9b0d"/><stop offset="0.866" stop-color="#ff9901"/><stop offset="1.000" stop-color="#ff7700"/></linearGradient><linearGradient id="r56" x1="204" x2="363" y1="0" y2="0" gradientUnits="userSpaceOnUse"><stop offset="0.000" stop-color="#00ffd1"/><stop offset="0.409" stop-color="#00ffb9"/><stop offset="0.415" stop-color="#2bffb8"/><stop offset="0.428" stop-color="#4dffb7"/><stop offset="0.453" stop-color="#75ffb4"/><stop offset="0.509" stop-color="#b1ffae"/><stop offset="0.610" stop-color="#feff9f"/><stop offset="0.704" stop-color="#ffcb6d"/><stop offset="0.830" stop-color="#ff9d2d"/><stop offset="0.862" stop-color="#ff9412"/><stop offset="0.874" stop-color="#ff9000"/><stop offset="1.000" stop-color="#ff7100"/></linearGradient><linearGradient id="r57" x1="204" x2="365" y1="0" y2="0" gradientUnits="userSpaceOnUse"><stop offset="0.000" stop-color="#00ffd4"/><stop offset="0.398" stop-color="#00ffbe"/><stop offset="0.410" stop-color="#37ffbd"/><stop offset="0.429" stop-color="#60ffbb"/><stop offset="0.466" stop-color="#91ffb8"/><stop offset="0.547" stop-color="#daffae"/><stop offset="0.596" stop-color="#ffffa6"/><stop offset="0.683" stop-color="#ffcc77"/><stop offset="0.832" stop-color="#ff962e"/><stop offset="0.863" stop-color="#ff8d15"/><stop offset="0.876" stop-color="#ff8902"/><stop offset="1.000" stop-color="#ff6a00"/></linearGradient><linearGradient id="r58" x1="204" x2="367" y1="0" y2="0" gradientUnits="userSpaceOnUse"><stop offset="0.000" stop-color="#00ffd7"/><stop offset="0.387" stop-color="#00ffc4"/><stop offset="0.393" stop-color="#08ffc3"/><stop offset="0.399" stop-color="#2fffc3"/><stop offset="0.411" stop-color="#50ffc2"/><stop offset="0.442" stop-color="#81ffbf"/><stop offset="0.503" stop-color="#c0ffb9"/><stop offset="0.583" stop-color="#fffead"/><stop offset="0.669" stop-color="#ffcb7d"/><stop offset="0.816" stop-color="#ff9439"/><stop offset="0.865" stop-color="#ff8618"/><stop offset="0.883" stop-color="#ff8100"/><stop offset="1.000" stop-color="#ff6300"/></linearGradient><linearGradient id="r59" x1="205" x2="369" y1="0" y2="0" gradientUnits="userSpaceOnUse"><stop offset="0.000" stop-color="#00ffdb"/><stop offset="0.378" stop-color="#00ffc8"/><stop offset="0.384" stop-color="#23ffc8"/><stop offset="0.390" stop-color="#3bffc8"/><stop offset="0.409" stop-color="#63ffc6"/><stop offset="0.445" stop-color="#95ffc3"/><stop offset="0.524" stop-color="#e0ffbb"/><stop offset="0.567" stop-color="#fffdb4"/><stop offset="0.652" stop-color="#ffc984"/><stop offset="0.793" stop-color="#ff9445"/><stop offset="0.860" stop-color="#ff8020"/><stop offset="0.878" stop-color="#ff7b0d"/><stop offset="0.884" stop-color="#ff7902"/><stop offset="1.000" stop-color="#ff5c00"/></linearGradient><linearGradient id="r60" x1="205" x2="371" y1="0" y2="0" gradientUnits="userSpaceOnUse"><stop offset="0.000" stop-color="#00ffde"/><stop offset="0.367" stop-color="#00ffce"/><stop offset="0.373" stop-color="#11ffce"/><stop offset="0.380" stop-color="#33ffcd"/><stop offset="0.392" stop-color="#54ffcc"/><stop offset="0.422" stop-color="#85ffca"/><stop offset="0.482" stop-color="#c5ffc5"/><stop offset="0.548" stop-color="#feffbe"/><stop offset="0.639" stop-color="#ffc88a"/><stop offset="0.777" stop-color="#ff924d"/><stop offset="0.861" stop-color="#ff7921"/><stop offset="0.886" stop-color="#ff7208"/><stop offset="0.892" stop-color="#ff7100"/><stop offset="1.000" stop-color="#ff5400"/></linearGradient><linearGradient id="r61" x1="205" x2="373" y1="0" y2="0" gradientUnits="userSpaceOnUse"><stop offset="0.000" stop-color="#00ffe2"/><stop offset="0.363" stop-color="#00ffd3"/><stop offset="0.369" stop-color="#28ffd3"/><stop offset="0.375" stop-color="#3effd2"/><stop offset="0.393" stop-color="#67ffd1"/><stop offset="0.429" stop-color="#99ffcf"/><stop offset="0.506" stop-color="#e6ffc8"/><stop offset="0.536" stop-color="#ffffc5"/><stop offset="0.613" stop-color="#ffcc96"/><stop offset="0.744" stop-color="#ff965c"/><stop offset="0.857" stop-color="#ff7327"/><stop offset="0.887" stop-color="#ff6b0c"/><stop offset="0.893" stop-color="#ff6903"/><stop offset="1.000" stop-color="#ff4c00"/></linearGradient><linearGradient id="r62" x1="206" x2="375" y1="0" y2="0" gradientUnits="userSpaceOnUse"><stop offset="0.000" stop-color="#00ffe5"/><stop offset="0.349" stop-color="#00ffd9"/><stop offset="0.355" stop-color="#18ffd8"/><stop offset="0.361" stop-color="#36ffd8"/><stop offset="0.373" stop-color="#57ffd7"/><stop offset="0.402" stop-color="#89ffd6"/><stop offset="0.462" stop-color="#cbffd2"/><stop offset="0.521" stop-color="#fffecc"/><stop offset="0.598" stop-color="#ffcb9b"/><stop offset="0.728" stop-color="#ff9462"/><stop offset="0.858" stop-color="#ff6c28"/><stop offset="0.888" stop-color="#ff6310"/><stop offset="0.899" stop-color="#ff6000"/><stop offset="1.000" stop-color="#ff4400"/></linearGradient><linearGradient id="r63" x1="206" x2="377" y1="0" y2="0" gradientUnits="userSpaceOnUse"><stop offset="0.000" stop-color="#00ffe9"/><stop offset="0.345" stop-color="#00ffde"/><stop offset="0.351" stop-color="#2cffde"/><stop offset="0.363" stop-color="#52ffdd"/><stop offset="0.386" stop-color="#7effdc"/><stop offset="0.439" stop-color="#bfffd9"/><stop offset="0.509" stop-color="#fffdd2"/><stop offset="0.585" stop-color="#ffc9a1"/><stop offset="0.708" stop-color="#ff946a"/><stop offset="0.860" stop-color="#ff6429"/><stop offset="0.895" stop-color="#ff5a0c"/><stop offset="0.901" stop-color="#ff5803"/><stop offset="1.000" stop-color="#ff3a00"/></linearGradient><linearGradient id="r64" x1="207" x2="379" y1="0" y2="0" gradientUnits="userSpaceOnUse"><stop offset="0.000" stop-color="#00ffec"/><stop offset="0.331" stop-color="#00ffe4"/><stop offset="0.343" stop-color="#3affe3"/><stop offset="0.355" stop-color="#5bffe3"/><stop offset="0.384" stop-color="#8dffe1"/><stop offset="0.442" stop-color="#d0ffdf"/><stop offset="0.494" stop-color="#fffcd9"/><stop offset="0.564" stop-color="#ffcbaa"/><stop offset="0.686" stop-color="#ff9472"/><stop offset="0.860" stop-color="#ff5c2a"/><stop offset="0.895" stop-color="#ff5210"/><stop offset="0.907" stop-color="#ff4e00"/><stop offset="1.000" stop-color="#ff2e00"/></linearGradient><linearGradient id="r65" x1="207" x2="381" y1="0" y2="0" gradientUnits="userSpaceOnUse"><stop offset="0.000" stop-color="#00fff0"/><stop offset="0.328" stop-color="#00ffe9"/><stop offset="0.333" stop-color="#31ffe9"/><stop offset="0.345" stop-color="#56ffe9"/><stop offset="0.368" stop-color="#82ffe8"/><stop offset="0.420" stop-color="#c4ffe6"/><stop offset="0.477" stop-color="#feffe3"/><stop offset="0.552" stop-color="#ffc9af"/><stop offset="0.667" stop-color="#ff9379"/><stop offset="0.862" stop-color="#ff532b"/><stop offset="0.897" stop-color="#ff4913"/><stop offset="0.914" stop-color="#ff4300"/><stop offset="1.000" stop-color="#ff2000"/></linearGradient><linearGradient id="r66" x1="207" x2="383" y1="0" y2="0" gradientUnits="userSpaceOnUse"><stop offset="0.000" stop-color="#00fff4"/><stop offset="0.318" stop-color="#00ffef"/><stop offset="0.324" stop-color="#23ffef"/><stop offset="0.330" stop-color="#3effef"/><stop offset="0.341" stop-color="#5effee"/><stop offset="0.369" stop-color="#91ffee"/><stop offset="0.426" stop-color="#d7ffec"/><stop offset="0.466" stop-color="#ffffeb"/><stop offset="0.534" stop-color="#ffcab8"/><stop offset="0.648" stop-color="#ff9381"/><stop offset="0.864" stop-color="#ff4a2c"/><stop offset="0.903" stop-color="#ff3d0f"/><stop offset="0.915" stop-color="#ff3800"/><stop offset="0.983" stop-color="#ff1600"/><stop offset="1.000" stop-color="#ff0400"/></linearGradient><linearGradient id="r67" x1="208" x2="385" y1="0" y2="0" gradientUnits="userSpaceOnUse"><stop offset="0.000" stop-color="#00fff8"/><stop offset="0.305" stop-color="#00fff5"/><stop offset="0.311" stop-color="#0cfff5"/><stop offset="0.316" stop-color="#35fff5"/><stop offset="0.328" stop-color="#5afff5"/><stop offset="0.350" stop-color="#86fff4"/><stop offset="0.401" stop-color="#cafff3"/><stop offset="0.452" stop-color="#fffef1"/><stop offset="0.514" stop-color="#ffccc0"/><stop offset="0.621" stop-color="#ff968a"/><stop offset="0.870" stop-color="#ff3e2a"/><stop offset="0.904" stop-color="#ff3112"/><stop offset="0.921" stop-color="#ff2900"/><stop offset="0.960" stop-color="#ff0e00"/><stop offset="0.972" stop-color="#ff0000"/><stop offset="1.000" stop-color="#ff0000"/></linearGradient><linearGradient id="r68" x1="208" x2="387" y1="0" y2="0" gradientUnits="userSpaceOnUse"><stop offset="0.000" stop-color="#00fffc"/><stop offset="0.302" stop-color="#00fffb"/><stop offset="0.307" stop-color="#29fffb"/><stop offset="0.313" stop-color="#42fffb"/><stop offset="0.330" stop-color="#6ffffb"/><stop offset="0.363" stop-color="#a6fffa"/><stop offset="0.436" stop-color="#fcfffa"/><stop offset="0.514" stop-color="#ffc3bf"/><stop offset="0.626" stop-color="#ff8c88"/><stop offset="0.872" stop-color="#ff322a"/><stop offset="0.911" stop-color="#ff1e0f"/><stop offset="0.922" stop-color="#ff1600"/><stop offset="0.939" stop-color="#ff0100"/><stop offset="1.000" stop-color="#ff0000"/></linearGradient><linearGradient id="r69" x1="208" x2="389" y1="0" y2="0" gradientUnits="userSpaceOnUse"><stop offset="0.000" stop-color="#00feff"/><stop offset="0.293" stop-color="#00fdff"/><stop offset="0.298" stop-color="#15fdff"/><stop offset="0.304" stop-color="#39fdff"/><stop offset="0.315" stop-color="#5dfdff"/><stop offset="0.337" stop-color="#8afdff"/><stop offset="0.387" stop-color="#cffdff"/><stop offset="0.431" stop-color="#fffbfe"/><stop offset="0.492" stop-color="#ffc8cb"/><stop offset="0.591" stop-color="#ff9396"/><stop offset="0.862" stop-color="#ff2930"/><stop offset="0.895" stop-color="#ff131f"/><stop offset="0.912" stop-color="#ff0012"/><stop offset="0.928" stop-color="#ff0000"/><stop offset="1.000" stop-color="#ff0000"/></linearGradient><linearGradient id="r70" x1="209" x2="391" y1="0" y2="0" gradientUnits="userSpaceOnUse"><stop offset="0.000" stop-color="#00faff"/><stop offset="0.286" stop-color="#00f7ff"/><stop offset="0.291" stop-color="#2cf7ff"/><stop offset="0.297" stop-color="#44f7ff"/><stop offset="0.313" stop-color="#6ff7ff"/><stop offset="0.346" stop-color="#a6f6ff"/><stop offset="0.418" stop-color="#faf5ff"/><stop offset="0.429" stop-color="#ffeef9"/><stop offset="0.495" stop-color="#ffbbc5"/><stop offset="0.604" stop-color="#ff858f"/><stop offset="0.830" stop-color="#ff2b3e"/><stop offset="0.868" stop-color="#ff0f2f"/><stop offset="0.879" stop-color="#ff0029"/><stop offset="0.918" stop-color="#ff000f"/><stop offset="0.929" stop-color="#ff0000"/><stop offset="1.000" stop-color="#ff0000"/></linearGradient><linearGradient id="r71" x1="209" x2="393" y1="0" y2="0" gradientUnits="userSpaceOnUse"><stop offset="0.000" stop-color="#00f6ff"/><stop offset="0.277" stop-color="#00f1ff"/><stop offset="0.288" stop-color="#3af1ff"/><stop offset="0.299" stop-color="#5cf1ff"/><stop offset="0.326" stop-color="#90f0ff"/><stop offset="0.380" stop-color="#d6eeff"/><stop offset="0.418" stop-color="#ffedff"/><stop offset="0.478" stop-color="#ffbdce"/><stop offset="0.582" stop-color="#ff8798"/><stop offset="0.804" stop-color="#ff2a48"/><stop offset="0.837" stop-color="#ff123c"/><stop offset="0.848" stop-color="#ff0238"/><stop offset="0.913" stop-color="#ff0016"/><stop offset="0.935" stop-color="#ff0000"/><stop offset="1.000" stop-color="#ff0000"/></linearGradient><linearGradient id="r72" x1="210" x2="395" y1="0" y2="0" gradientUnits="userSpaceOnUse"><stop offset="0.000" stop-color="#00f2ff"/><stop offset="0.270" stop-color="#00ebff"/><stop offset="0.276" stop-color="#2eebff"/><stop offset="0.286" stop-color="#55ebff"/><stop offset="0.308" stop-color="#82eaff"/><stop offset="0.357" stop-color="#c4e8ff"/><stop offset="0.411" stop-color="#ffe5ff"/><stop offset="0.476" stop-color="#ffb3cc"/><stop offset="0.584" stop-color="#ff7d95"/><stop offset="0.773" stop-color="#ff2c53"/><stop offset="0.805" stop-color="#ff1448"/><stop offset="0.822" stop-color="#ff0043"/><stop offset="0.908" stop-color="#ff001c"/><stop offset="0.930" stop-color="#ff0008"/><stop offset="0.935" stop-color="#ff0001"/><stop offset="1.000" stop-color="#ff0000"/></linearGradient><linearGradient id="r73" x1="210" x2="397" y1="0" y2="0" gradientUnits="userSpaceOnUse"><stop offset="0.000" stop-color="#00edff"/><stop offset="0.262" stop-color="#00e6ff"/><stop offset="0.273" stop-color="#3be5ff"/><stop offset="0.283" stop-color="#5be5ff"/><stop offset="0.310" stop-color="#8ee3ff"/><stop offset="0.364" stop-color="#d1e1ff"/><stop offset="0.406" stop-color="#fedeff"/><stop offset="0.476" stop-color="#ffaaca"/><stop offset="0.588" stop-color="#ff7293"/><stop offset="0.749" stop-color="#ff2b5b"/><stop offset="0.781" stop-color="#ff1151"/><stop offset="0.791" stop-color="#ff004d"/><stop offset="0.904" stop-color="#ff0020"/><stop offset="0.930" stop-color="#ff000b"/><stop offset="0.941" stop-color="#ff0000"/><stop offset="1.000" stop-color="#ff0000"/></linearGradient><linearGradient id="r74" x1="210" x2="399" y1="0" y2="0" gradientUnits="userSpaceOnUse"><stop offset="0.000" stop-color="#00e9ff"/><stop offset="0.259" stop-color="#02e0ff"/><stop offset="0.265" stop-color="#30e0ff"/><stop offset="0.275" stop-color="#54dfff"/><stop offset="0.296" stop-color="#80deff"/><stop offset="0.344" stop-color="#c0dbff"/><stop offset="0.402" stop-color="#fed6ff"/><stop offset="0.476" stop-color="#ffa1c8"/><stop offset="0.593" stop-color="#ff6891"/><stop offset="0.725" stop-color="#ff2963"/><stop offset="0.751" stop-color="#ff135b"/><stop offset="0.762" stop-color="#ff0357"/><stop offset="0.899" stop-color="#ff0024"/><stop offset="0.931" stop-color="#ff000e"/><stop offset="0.942" stop-color="#ff0001"/><stop offset="1.000" stop-color="#ff0000"/></linearGradient><linearGradient id="r75" x1="211" x2="401" y1="0" y2="0" gradientUnits="userSpaceOnUse"><stop offset="0.000" stop-color="#00e5ff"/><stop offset="0.247" stop-color="#00dbff"/><stop offset="0.253" stop-color="#22daff"/><stop offset="0.258" stop-color="#3cdaff"/><stop offset="0.274" stop-color="#66d9ff"/><stop offset="0.305" stop-color="#9ad7ff"/><stop offset="0.374" stop-color="#e8d1ff"/><stop offset="0.400" stop-color="#ffccfc"/><stop offset="0.468" stop-color="#ff9bc9"/><stop offset="0.584" stop-color="#ff6292"/><stop offset="0.700" stop-color="#ff286b"/><stop offset="0.726" stop-color="#ff0f62"/><stop offset="0.737" stop-color="#ff005f"/><stop offset="0.895" stop-color="#ff0028"/><stop offset="0.932" stop-color="#ff0011"/><stop offset="0.947" stop-color="#ff0000"/><stop offset="1.000" stop-color="#ff0000"/></linearGradient><linearGradient id="r76" x1="211" x2="403" y1="0" y2="0" gradientUnits="userSpaceOnUse"><stop offset="0.000" stop-color="#00e1ff"/><stop offset="0.240" stop-color="#00d5ff"/><stop offset="0.245" stop-color="#0cd5ff"/><stop offset="0.250" stop-color="#32d4ff"/><stop offset="0.260" stop-color="#54d4ff"/><stop offset="0.281" stop-color="#7ed2ff"/><stop offset="0.328" stop-color="#bcceff"/><stop offset="0.391" stop-color="#fdc8ff"/><stop offset="0.474" stop-color="#ff8fc4"/><stop offset="0.599" stop-color="#ff528c"/><stop offset="0.682" stop-color="#ff2270"/><stop offset="0.703" stop-color="#ff0a6a"/><stop offset="0.708" stop-color="#ff0068"/><stop offset="0.896" stop-color="#ff0029"/><stop offset="0.938" stop-color="#ff000e"/><stop offset="0.948" stop-color="#ff0001"/><stop offset="1.000" stop-color="#ff0000"/></linearGradient><linearGradient id="r77" x1="212" x2="404" y1="0" y2="0" gradientUnits="userSpaceOnUse"><stop offset="0.000" stop-color="#00ddff"/><stop offset="0.234" stop-color="#00d0ff"/><stop offset="0.240" stop-color="#25cfff"/><stop offset="0.245" stop-color="#3dcfff"/><stop offset="0.260" stop-color="#65ceff"/><stop offset="0.292" stop-color="#98cbff"/><stop offset="0.359" stop-color="#e3c3ff"/><stop offset="0.391" stop-color="#ffbefd"/><stop offset="0.464" stop-color="#ff8cc8"/><stop offset="0.583" stop-color="#ff4f92"/><stop offset="0.656" stop-color="#ff2479"/><stop offset="0.677" stop-color="#ff0e73"/><stop offset="0.682" stop-color="#ff0471"/><stop offset="0.708" stop-color="#ff0069"/><stop offset="0.901" stop-color="#ff0029"/><stop offset="0.943" stop-color="#ff0010"/><stop offset="0.958" stop-color="#ff0000"/><stop offset="1.000" stop-color="#ff0000"/></linearGradient><linearGradient id="r78" x1="212" x2="403" y1="0" y2="0" gradientUnits="userSpaceOnUse"><stop offset="0.000" stop-color="#00d9ff"/><stop offset="0.230" stop-color="#00caff"/><stop offset="0.236" stop-color="#13caff"/><stop offset="0.241" stop-color="#33caff"/><stop offset="0.251" stop-color="#54c9ff"/><stop offset="0.277" stop-color="#84c6ff"/><stop offset="0.330" stop-color="#c4c0ff"/><stop offset="0.393" stop-color="#ffb7fd"/><stop offset="0.466" stop-color="#ff85ca"/><stop offset="0.586" stop-color="#ff4794"/><stop offset="0.649" stop-color="#ff1e7e"/><stop offset="0.670" stop-color="#ff0078"/><stop offset="0.916" stop-color="#ff002a"/><stop offset="0.963" stop-color="#ff000e"/><stop offset="0.979" stop-color="#ff0000"/><stop offset="1.000" stop-color="#ff0000"/></linearGradient><linearGradient id="r79" x1="213" x2="400" y1="0" y2="0" gradientUnits="userSpaceOnUse"><stop offset="0.000" stop-color="#00d4ff"/><stop offset="0.230" stop-color="#00c5ff"/><stop offset="0.235" stop-color="#28c4ff"/><stop offset="0.241" stop-color="#3dc4ff"/><stop offset="0.257" stop-color="#64c2ff"/><stop offset="0.289" stop-color="#95bfff"/><stop offset="0.358" stop-color="#dfb6ff"/><stop offset="0.396" stop-color="#ffaffe"/><stop offset="0.471" stop-color="#ff7fcb"/><stop offset="0.594" stop-color="#ff3e96"/><stop offset="0.642" stop-color="#ff1b85"/><stop offset="0.658" stop-color="#ff0180"/><stop offset="0.941" stop-color="#ff002b"/><stop offset="0.989" stop-color="#ff0010"/><stop offset="1.000" stop-color="#ff0005"/></linearGradient><linearGradient id="r80" x1="213" x2="396" y1="0" y2="0" gradientUnits="userSpaceOnUse"><stop offset="0.000" stop-color="#00d0ff"/><stop offset="0.230" stop-color="#00c0ff"/><stop offset="0.240" stop-color="#34bfff"/><stop offset="0.251" stop-color="#53beff"/><stop offset="0.279" stop-color="#82bbff"/><stop offset="0.333" stop-color="#c1b4ff"/><stop offset="0.404" stop-color="#ffa8fe"/><stop offset="0.481" stop-color="#ff78cc"/><stop offset="0.612" stop-color="#ff2f95"/><stop offset="0.639" stop-color="#ff178c"/><stop offset="0.656" stop-color="#ff0087"/><stop offset="0.973" stop-color="#ff002b"/><stop offset="1.000" stop-color="#ff001f"/></linearGradient><linearGradient id="r81" x1="214" x2="391" y1="0" y2="0" gradientUnits="userSpaceOnUse"><stop offset="0.000" stop-color="#00ccff"/><stop offset="0.232" stop-color="#00baff"/><stop offset="0.237" stop-color="#2abaff"/><stop offset="0.249" stop-color="#4db9ff"/><stop offset="0.271" stop-color="#76b6ff"/><stop offset="0.322" stop-color="#b1b0ff"/><stop offset="0.412" stop-color="#ffa0ff"/><stop offset="0.497" stop-color="#ff6dca"/><stop offset="0.616" stop-color="#ff2a9b"/><stop offset="0.638" stop-color="#ff1393"/><stop offset="0.650" stop-color="#ff0090"/><stop offset="1.000" stop-color="#ff0030"/></linearGradient><linearGradient id="r82" x1="214" x2="387" y1="0" y2="0" gradientUnits="userSpaceOnUse"><stop offset="0.000" stop-color="#00c8ff"/><stop offset="0.231" stop-color="#00b6ff"/><stop offset="0.243" stop-color="#36b4ff"/><stop offset="0.260" stop-color="#5eb2ff"/><stop offset="0.295" stop-color="#8faeff"/><stop offset="0.370" stop-color="#d6a3ff"/><stop offset="0.422" stop-color="#ff99ff"/><stop offset="0.509" stop-color="#ff66cb"/><stop offset="0.607" stop-color="#ff2da4"/><stop offset="0.630" stop-color="#ff179c"/><stop offset="0.642" stop-color="#ff0299"/><stop offset="1.000" stop-color="#ff003b"/></linearGradient><linearGradient id="r83" x1="215" x2="383" y1="0" y2="0" gradientUnits="userSpaceOnUse"><stop offset="0.000" stop-color="#00c3ff"/><stop offset="0.232" stop-color="#03b0ff"/><stop offset="0.238" stop-color="#2cafff"/><stop offset="0.250" stop-color="#4daeff"/><stop offset="0.280" stop-color="#7caaff"/><stop offset="0.339" stop-color="#b9a2ff"/><stop offset="0.429" stop-color="#ff90ff"/><stop offset="0.524" stop-color="#ff5aca"/><stop offset="0.607" stop-color="#ff26a9"/><stop offset="0.625" stop-color="#ff12a3"/><stop offset="0.637" stop-color="#ff00a0"/><stop offset="0.929" stop-color="#ff0055"/><stop offset="1.000" stop-color="#ff0044"/></linearGradient><linearGradient id="r84" x1="215" x2="378" y1="0" y2="0" gradientUnits="userSpaceOnUse"><stop offset="0.000" stop-color="#00bfff"/><stop offset="0.233" stop-color="#00abff"/><stop offset="0.239" stop-color="#1faaff"/><stop offset="0.245" stop-color="#37aaff"/><stop offset="0.264" stop-color="#5da7ff"/><stop offset="0.301" stop-color="#8da2ff"/><stop offset="0.380" stop-color="#d295ff"/><stop offset="0.442" stop-color="#fe88ff"/><stop offset="0.546" stop-color="#ff4dc8"/><stop offset="0.607" stop-color="#ff23b1"/><stop offset="0.626" stop-color="#ff0cab"/><stop offset="0.632" stop-color="#ff00a9"/><stop offset="0.883" stop-color="#ff0068"/><stop offset="1.000" stop-color="#ff004e"/></linearGradient><linearGradient id="r85" x1="216" x2="374" y1="0" y2="0" gradientUnits="userSpaceOnUse"><stop offset="0.000" stop-color="#00bbff"/><stop offset="0.228" stop-color="#00a6ff"/><stop offset="0.234" stop-color="#0ca6ff"/><stop offset="0.241" stop-color="#2da5ff"/><stop offset="0.253" stop-color="#4da3ff"/><stop offset="0.285" stop-color="#7b9fff"/><stop offset="0.348" stop-color="#b695ff"/><stop offset="0.449" stop-color="#fe7fff"/><stop offset="0.563" stop-color="#ff3ec7"/><stop offset="0.608" stop-color="#ff1ab6"/><stop offset="0.620" stop-color="#ff03b2"/><stop offset="0.848" stop-color="#ff0076"/><stop offset="1.000" stop-color="#ff0056"/></linearGradient><linearGradient id="r86" x1="216" x2="370" y1="0" y2="0" gradientUnits="userSpaceOnUse"><stop offset="0.000" stop-color="#00b7ff"/><stop offset="0.234" stop-color="#00a1ff"/><stop offset="0.240" stop-color="#22a0ff"/><stop offset="0.247" stop-color="#379fff"/><stop offset="0.266" stop-color="#5d9cff"/><stop offset="0.312" stop-color="#9196ff"/><stop offset="0.403" stop-color="#d885ff"/><stop offset="0.468" stop-color="#ff73fd"/><stop offset="0.571" stop-color="#ff34ca"/><stop offset="0.604" stop-color="#ff15be"/><stop offset="0.617" stop-color="#ff00ba"/><stop offset="0.831" stop-color="#ff0080"/><stop offset="1.000" stop-color="#ff005d"/></linearGradient><linearGradient id="r87" x1="217" x2="365" y1="0" y2="0" gradientUnits="userSpaceOnUse"><stop offset="0.000" stop-color="#00b2ff"/><stop offset="0.230" stop-color="#009cff"/><stop offset="0.236" stop-color="#129bff"/><stop offset="0.243" stop-color="#2f9aff"/><stop offset="0.257" stop-color="#4d98ff"/><stop offset="0.291" stop-color="#7994ff"/><stop offset="0.365" stop-color="#b887ff"/><stop offset="0.480" stop-color="#ff69fd"/><stop offset="0.574" stop-color="#ff2dd0"/><stop offset="0.601" stop-color="#ff0ec6"/><stop offset="0.608" stop-color="#ff00c4"/><stop offset="0.811" stop-color="#ff008c"/><stop offset="1.000" stop-color="#ff0066"/></linearGradient><linearGradient id="r88" x1="218" x2="361" y1="0" y2="0" gradientUnits="userSpaceOnUse"><stop offset="0.000" stop-color="#00adff"/><stop offset="0.231" stop-color="#0096ff"/><stop offset="0.238" stop-color="#2495ff"/><stop offset="0.252" stop-color="#4793ff"/><stop offset="0.280" stop-color="#6d8fff"/><stop offset="0.343" stop-color="#a585ff"/><stop offset="0.483" stop-color="#fd61ff"/><stop offset="0.566" stop-color="#ff2bd9"/><stop offset="0.587" stop-color="#ff13d1"/><stop offset="0.594" stop-color="#ff05cf"/><stop offset="0.615" stop-color="#ff00c7"/><stop offset="0.818" stop-color="#ff0091"/><stop offset="1.000" stop-color="#ff006d"/></linearGradient><linearGradient id="r89" x1="218" x2="357" y1="0" y2="0" gradientUnits="userSpaceOnUse"><stop offset="0.000" stop-color="#00a9ff"/><stop offset="0.230" stop-color="#0091ff"/><stop offset="0.245" stop-color="#308fff"/><stop offset="0.266" stop-color="#578cff"/><stop offset="0.309" stop-color="#8585ff"/><stop offset="0.403" stop-color="#c773ff"/><stop offset="0.504" stop-color="#ff52fe"/><stop offset="0.561" stop-color="#ff28e3"/><stop offset="0.576" stop-color="#ff18dd"/><stop offset="0.590" stop-color="#ff00d8"/><stop offset="0.770" stop-color="#ff00a3"/><stop offset="1.000" stop-color="#ff0074"/></linearGradient><linearGradient id="r90" x1="219" x2="352" y1="0" y2="0" gradientUnits="userSpaceOnUse"><stop offset="0.000" stop-color="#00a4ff"/><stop offset="0.233" stop-color="#008bff"/><stop offset="0.241" stop-color="#268aff"/><stop offset="0.256" stop-color="#4788ff"/><stop offset="0.293" stop-color="#7482ff"/><stop offset="0.368" stop-color="#ad74ff"/><stop offset="0.489" stop-color="#f152ff"/><stop offset="0.526" stop-color="#ff3efa"/><stop offset="0.564" stop-color="#ff1dea"/><stop offset="0.571" stop-color="#ff12e7"/><stop offset="0.579" stop-color="#ff00e4"/><stop offset="0.744" stop-color="#ff00b0"/><stop offset="1.000" stop-color="#ff007c"/></linearGradient><linearGradient id="r91" x1="219" x2="348" y1="0" y2="0" gradientUnits="userSpaceOnUse"><stop offset="0.000" stop-color="#009fff"/><stop offset="0.233" stop-color="#0086ff"/><stop offset="0.248" stop-color="#3184ff"/><stop offset="0.271" stop-color="#5781ff"/><stop offset="0.326" stop-color="#8a77ff"/><stop offset="0.434" stop-color="#cd5eff"/><stop offset="0.519" stop-color="#f83bff"/><stop offset="0.543" stop-color="#ff2afb"/><stop offset="0.558" stop-color="#ff17f4"/><stop offset="0.566" stop-color="#ff07f1"/><stop offset="0.574" stop-color="#ff00ed"/><stop offset="0.736" stop-color="#ff00b9"/><stop offset="1.000" stop-color="#ff0083"/></linearGradient><linearGradient id="r92" x1="220" x2="344" y1="0" y2="0" gradientUnits="userSpaceOnUse"><stop offset="0.000" stop-color="#009aff"/><stop offset="0.226" stop-color="#0081ff"/><stop offset="0.234" stop-color="#0480ff"/><stop offset="0.242" stop-color="#287fff"/><stop offset="0.258" stop-color="#477dff"/><stop offset="0.298" stop-color="#7376ff"/><stop offset="0.387" stop-color="#af63ff"/><stop offset="0.492" stop-color="#e540ff"/><stop offset="0.532" stop-color="#f825ff"/><stop offset="0.548" stop-color="#ff0fff"/><stop offset="0.556" stop-color="#ff00fb"/><stop offset="0.702" stop-color="#ff00c9"/><stop offset="0.952" stop-color="#ff0092"/><stop offset="1.000" stop-color="#ff008a"/></linearGradient><linearGradient id="r93" x1="221" x2="339" y1="0" y2="0" gradientUnits="userSpaceOnUse"><stop offset="0.000" stop-color="#0095ff"/><stop offset="0.229" stop-color="#007bff"/><stop offset="0.237" stop-color="#1d7aff"/><stop offset="0.246" stop-color="#3279ff"/><stop offset="0.271" stop-color="#5675ff"/><stop offset="0.331" stop-color="#886aff"/><stop offset="0.449" stop-color="#ca4aff"/><stop offset="0.508" stop-color="#e52dff"/><stop offset="0.534" stop-color="#f014ff"/><stop offset="0.542" stop-color="#f401ff"/><stop offset="0.576" stop-color="#ff00fc"/><stop offset="0.737" stop-color="#ff00c8"/><stop offset="1.000" stop-color="#ff0092"/></linearGradient><linearGradient id="r94" x1="222" x2="335" y1="0" y2="0" gradientUnits="userSpaceOnUse"><stop offset="0.000" stop-color="#008fff"/><stop offset="0.221" stop-color="#0076ff"/><stop offset="0.230" stop-color="#0b75ff"/><stop offset="0.239" stop-color="#2a73ff"/><stop offset="0.257" stop-color="#4770ff"/><stop offset="0.301" stop-color="#7269ff"/><stop offset="0.398" stop-color="#ad52ff"/><stop offset="0.478" stop-color="#d233ff"/><stop offset="0.513" stop-color="#e217ff"/><stop offset="0.522" stop-color="#e508ff"/><stop offset="0.531" stop-color="#e900ff"/><stop offset="0.593" stop-color="#ff00fc"/><stop offset="0.761" stop-color="#ff00c9"/><stop offset="1.000" stop-color="#ff0099"/></linearGradient><linearGradient id="r95" x1="222" x2="331" y1="0" y2="0" gradientUnits="userSpaceOnUse"><stop offset="0.000" stop-color="#008bff"/><stop offset="0.229" stop-color="#006fff"/><stop offset="0.239" stop-color="#206eff"/><stop offset="0.257" stop-color="#416bff"/><stop offset="0.294" stop-color="#6764ff"/><stop offset="0.376" stop-color="#9b52ff"/><stop offset="0.459" stop-color="#c334ff"/><stop offset="0.495" stop-color="#d31bff"/><stop offset="0.514" stop-color="#da00ff"/><stop offset="0.615" stop-color="#ff00fc"/><stop offset="0.789" stop-color="#ff00ca"/><stop offset="1.000" stop-color="#ff00a0"/></linearGradient><linearGradient id="r96" x1="223" x2="326" y1="0" y2="0" gradientUnits="userSpaceOnUse"><stop offset="0.000" stop-color="#0085ff"/><stop offset="0.223" stop-color="#006aff"/><stop offset="0.233" stop-color="#1168ff"/><stop offset="0.243" stop-color="#2b67ff"/><stop offset="0.272" stop-color="#5162ff"/><stop offset="0.330" stop-color="#7d56ff"/><stop offset="0.437" stop-color="#b335ff"/><stop offset="0.476" stop-color="#c41dff"/><stop offset="0.485" stop-color="#c813ff"/><stop offset="0.495" stop-color="#cb02ff"/><stop offset="0.641" stop-color="#ff00fd"/><stop offset="0.825" stop-color="#ff00ca"/><stop offset="1.000" stop-color="#ff00a9"/></linearGradient><linearGradient id="r97" x1="224" x2="322" y1="0" y2="0" gradientUnits="userSpaceOnUse"><stop offset="0.000" stop-color="#007fff"/><stop offset="0.224" stop-color="#0062ff"/><stop offset="0.235" stop-color="#2261ff"/><stop offset="0.255" stop-color="#425dff"/><stop offset="0.306" stop-color="#6d53ff"/><stop offset="0.408" stop-color="#a335ff"/><stop offset="0.449" stop-color="#b41fff"/><stop offset="0.480" stop-color="#c000ff"/><stop offset="0.663" stop-color="#ff00fd"/><stop offset="0.867" stop-color="#ff00c9"/><stop offset="1.000" stop-color="#ff00b1"/></linearGradient><linearGradient id="r98" x1="225" x2="318" y1="0" y2="0" gradientUnits="userSpaceOnUse"><stop offset="0.000" stop-color="#0078ff"/><stop offset="0.215" stop-color="#005cff"/><stop offset="0.237" stop-color="#2d59ff"/><stop offset="0.269" stop-color="#5152ff"/><stop offset="0.344" stop-color="#8240ff"/><stop offset="0.419" stop-color="#a421ff"/><stop offset="0.441" stop-color="#ad0eff"/><stop offset="0.452" stop-color="#b100ff"/><stop offset="0.688" stop-color="#ff00fd"/><stop offset="0.903" stop-color="#ff00ca"/><stop offset="1.000" stop-color="#ff00b9"/></linearGradient><linearGradient id="r99" x1="225" x2="313" y1="0" y2="0" gradientUnits="userSpaceOnUse"><stop offset="0.000" stop-color="#0073ff"/><stop offset="0.227" stop-color="#0054ff"/><stop offset="0.239" stop-color="#2452ff"/><stop offset="0.261" stop-color="#424eff"/><stop offset="0.318" stop-color="#6c40ff"/><stop offset="0.398" stop-color="#9323ff"/><stop offset="0.420" stop-color="#9c12ff"/><stop offset="0.432" stop-color="#a103ff"/><stop offset="0.682" stop-color="#f300ff"/><stop offset="0.739" stop-color="#ff00fb"/><stop offset="0.977" stop-color="#ff00c7"/><stop offset="1.000" stop-color="#ff00c3"/></linearGradient><linearGradient id="r100" x1="226" x2="309" y1="0" y2="0" gradientUnits="userSpaceOnUse"><stop offset="0.000" stop-color="#006bff"/><stop offset="0.217" stop-color="#004dff"/><stop offset="0.241" stop-color="#2e48ff"/><stop offset="0.277" stop-color="#5140ff"/><stop offset="0.361" stop-color="#8024ff"/><stop offset="0.386" stop-color="#8b16ff"/><stop offset="0.410" stop-color="#9500ff"/><stop offset="0.639" stop-color="#df00ff"/><stop offset="0.759" stop-color="#ff00fe"/><stop offset="1.000" stop-color="#ff00cc"/></linearGradient><linearGradient id="r101" x1="227" x2="305" y1="0" y2="0" gradientUnits="userSpaceOnUse"><stop offset="0.000" stop-color="#0064ff"/><stop offset="0.205" stop-color="#0046ff"/><stop offset="0.218" stop-color="#0543ff"/><stop offset="0.231" stop-color="#2640ff"/><stop offset="0.256" stop-color="#423aff"/><stop offset="0.321" stop-color="#6b26ff"/><stop offset="0.359" stop-color="#7d0eff"/><stop offset="0.372" stop-color="#8200ff"/><stop offset="0.564" stop-color="#c300ff"/><stop offset="0.795" stop-color="#ff00fe"/><stop offset="1.000" stop-color="#ff00d5"/></linearGradient><linearGradient id="r102" x1="228" x2="301" y1="0" y2="0" gradientUnits="userSpaceOnUse"><stop offset="0.000" stop-color="#005cff"/><stop offset="0.205" stop-color="#003bff"/><stop offset="0.219" stop-color="#1b37ff"/><stop offset="0.233" stop-color="#2f34ff"/><stop offset="0.274" stop-color="#5127ff"/><stop offset="0.315" stop-color="#6812ff"/><stop offset="0.329" stop-color="#6e04ff"/><stop offset="0.411" stop-color="#8e00ff"/><stop offset="0.658" stop-color="#d500ff"/><stop offset="0.836" stop-color="#ff00ff"/><stop offset="1.000" stop-color="#ff00de"/></linearGradient><linearGradient id="r103" x1="229" x2="296" y1="0" y2="0" gradientUnits="userSpaceOnUse"><stop offset="0.000" stop-color="#0052ff"/><stop offset="0.194" stop-color="#0031ff"/><stop offset="0.209" stop-color="#0b2dff"/><stop offset="0.224" stop-color="#2728ff"/><stop offset="0.254" stop-color="#431dff"/><stop offset="0.299" stop-color="#5d00ff"/><stop offset="0.433" stop-color="#9000ff"/><stop offset="0.716" stop-color="#d900ff"/><stop offset="0.910" stop-color="#ff00fc"/><stop offset="1.000" stop-color="#ff00eb"/></linearGradient><linearGradient id="r104" x1="230" x2="292" y1="0" y2="0" gradientUnits="userSpaceOnUse"><stop offset="0.000" stop-color="#0048ff"/><stop offset="0.161" stop-color="#0029ff"/><stop offset="0.194" stop-color="#001fff"/><stop offset="0.210" stop-color="#1e17ff"/><stop offset="0.242" stop-color="#3d00ff"/><stop offset="0.323" stop-color="#6700ff"/><stop offset="0.500" stop-color="#9f00ff"/><stop offset="0.871" stop-color="#ef00ff"/><stop offset="0.968" stop-color="#ff00fc"/><stop offset="1.000" stop-color="#ff00f6"/></linearGradient><linearGradient id="r105" x1="231" x2="288" y1="0" y2="0" gradientUnits="userSpaceOnUse"><stop offset="0.000" stop-color="#003bff"/><stop offset="0.123" stop-color="#0020ff"/><stop offset="0.158" stop-color="#0011ff"/><stop offset="0.175" stop-color="#0004ff"/><stop offset="0.193" stop-color="#1000ff"/><stop offset="0.211" stop-color="#2900ff"/><stop offset="0.263" stop-color="#4c00ff"/><stop offset="0.386" stop-color="#7b00ff"/><stop offset="0.649" stop-color="#bb00ff"/><stop offset="1.000" stop-color="#fb00ff"/></linearGradient><linearGradient id="r106" x1="232" x2="283" y1="0" y2="0" gradientUnits="userSpaceOnUse"><stop offset="0.000" stop-color="#002bff"/><stop offset="0.078" stop-color="#0014ff"/><stop offset="0.118" stop-color="#0000ff"/><stop offset="0.176" stop-color="#0000ff"/><stop offset="0.196" stop-color="#2000ff"/><stop offset="0.235" stop-color="#3e00ff"/><stop offset="0.333" stop-color="#6600ff"/><stop offset="0.549" stop-color="#9d00ff"/><stop offset="1.000" stop-color="#ec00ff"/></linearGradient><linearGradient id="r107" x1="233" x2="279" y1="0" y2="0" gradientUnits="userSpaceOnUse"><stop offset="0.000" stop-color="#000eff"/><stop offset="0.022" stop-color="#0000ff"/><stop offset="0.152" stop-color="#0000ff"/><stop offset="0.196" stop-color="#2a00ff"/><stop offset="0.261" stop-color="#4c00ff"/><stop offset="0.413" stop-color="#7a00ff"/><stop offset="0.739" stop-color="#b900ff"/><stop offset="1.000" stop-color="#e000ff"/></linearGradient><linearGradient id="r108" x1="234" x2="275" y1="0" y2="0" gradientUnits="userSpaceOnUse"><stop offset="0.000" stop-color="#0000ff"/><stop offset="0.146" stop-color="#0000ff"/><stop offset="0.171" stop-color="#2200ff"/><stop offset="0.220" stop-color="#3e00ff"/><stop offset="0.341" stop-color="#6600ff"/><stop offset="0.610" stop-color="#9b00ff"/><stop offset="1.000" stop-color="#d400ff"/></linearGradient><linearGradient id="r109" x1="236" x2="270" y1="0" y2="0" gradientUnits="userSpaceOnUse"><stop offset="0.000" stop-color="#0000ff"/><stop offset="0.088" stop-color="#0000ff"/><stop offset="0.147" stop-color="#2b00ff"/><stop offset="0.235" stop-color="#4c00ff"/><stop offset="0.441" stop-color="#7900ff"/><stop offset="0.882" stop-color="#b600ff"/><stop offset="1.000" stop-color="#c400ff"/></linearGradient><linearGradient id="r110" x1="238" x2="266" y1="0" y2="0" gradientUnits="userSpaceOnUse"><stop offset="0.000" stop-color="#0000ff"/><stop offset="0.036" stop-color="#0500ff"/><stop offset="0.071" stop-color="#2300ff"/><stop offset="0.143" stop-color="#3e00ff"/><stop offset="0.321" stop-color="#6500ff"/><stop offset="0.714" stop-color="#9a00ff"/><stop offset="1.000" stop-color="#b700ff"/></linearGradient><linearGradient id="r111" x1="240" x2="262" y1="0" y2="0" gradientUnits="userSpaceOnUse"><stop offset="0.000" stop-color="#2c00ff"/><stop offset="0.136" stop-color="#4c00ff"/><stop offset="0.455" stop-color="#7800ff"/><stop offset="1.000" stop-color="#aa00ff"/></linearGradient><linearGradient id="r112" x1="242" x2="257" y1="0" y2="0" gradientUnits="userSpaceOnUse"><stop offset="0.000" stop-color="#4800ff"/><stop offset="0.467" stop-color="#7500ff"/><stop offset="1.000" stop-color="#9800ff"/></linearGradient><linearGradient id="r113" x1="244" x2="253" y1="0" y2="0" gradientUnits="userSpaceOnUse"><stop offset="0.000" stop-color="#5b00ff"/><stop offset="1.000" stop-color="#8900ff"/></linearGradient><clipPath id="lclip"><path d="M249.2 380.6 L248.6 380.6 L248.7 380.6 L248.9 380.6 L249.1 380.6 L249.3 380.5 L249.3 380.5 L249.2 380.6 L249 380.6 L248.7 380.7 L248.6 380.7 L248.7 380.7 L248.9 380.7 L249 380.6 L249 380.6 L248.9 380.6 L248.8 380.7 L248.6 380.7 L248.5 380.7 L248.5 380.7 L248.5 380.7 L248.5 380.7 L248.4 380.7 L248.4 380.7 L248.4 380.7 L248.4 380.7 L248.4 380.7 L248.2 380.7 L248 380.7 L247.8 380.6 L247.7 380.6 L247.6 380.5 L247.5 380.5 L247.4 380.4 L247.3 380.4 L247.2 380.3 L247.1 380.2 L247 380.2 L246.9 380.1 L246.8 380 L246.7 379.9 L246.5 379.8 L246.4 379.7 L246.3 379.5 L246.1 379.4 L245.9 379.3 L245.8 379.1 L245.6 378.9 L245.4 378.8 L245.2 378.6 L245 378.4 L244.8 378.2 L244.5 378 L244.3 377.8 L244 377.5 L243.7 377.3 L243.3 377 L243 376.7 L242.6 376.3 L242.2 376 L241.8 375.6 L241.3 375.2 L240.9 374.7 L240.4 374.2 L239.8 373.6 L239.3 373.1 L238.7 372.4 L238.1 371.7 L237.4 370.8 L236.7 369.8 L236 368.7 L235.2 367.4 L234.3 365.9 L233.4 364.2 L232.4 362.4 L231.4 360.3 L230.3 358 L229.2 355.3 L228 352.4 L226.7 349.2 L225.4 345.5 L223.9 341.5 L222.4 337.2 L220.8 332.4 L219.2 327.2 L217.6 321.4 L216 315.3 L214.5 308.7 L212.9 301.7 L211.3 294.2 L209.8 286.3 L208.3 278.2 L207 269.9 L205.7 261.5 L204.6 252.9 L203.6 244.4 L202.8 236 L202.2 227.8 L201.8 219.8 L201.6 212 L201.7 204.5 L202 197.5 L202.5 190.7 L203.3 184.4 L204.4 178.6 L205.7 173.5 L207.4 168.9 L209.3 164.9 L211.3 161.6 L213.6 159 L216.2 157.2 L218.9 156 L221.6 155.3 L224.5 155.1 L227.3 155.6 L230.2 156.4 L233 157.4 L235.8 158.5 L238.6 159.9 L241.4 161.4 L244.1 162.9 L246.7 164.5 L249.4 166.1 L251.9 167.8 L254.5 169.5 L257 171.3 L259.5 173.1 L262 175 L264.5 176.9 L266.9 178.9 L269.4 180.9 L271.8 182.9 L274.3 185 L276.7 187.1 L279.2 189.3 L281.6 191.5 L284 193.7 L286.4 195.9 L288.8 198.1 L291.2 200.4 L293.7 202.7 L296.1 205 L298.5 207.3 L300.9 209.6 L303.4 211.9 L305.8 214.3 L308.2 216.6 L310.6 219 L313 221.3 L315.4 223.7 L317.8 226 L320.2 228.4 L322.6 230.7 L324.9 233.1 L327.3 235.4 L329.6 237.7 L331.9 240 L334.2 242.3 L336.5 244.6 L338.8 246.8 L341.1 249.1 L343.3 251.3 L345.5 253.5 L347.7 255.6 L349.8 257.7 L351.9 259.8 L354 261.9 L356 263.9 L358 265.9 L360 267.8 L361.9 269.7 L363.7 271.6 L365.5 273.3 L367.2 275 L368.9 276.7 L370.5 278.3 L372 279.8 L373.5 281.3 L375 282.8 L376.4 284.2 L377.7 285.5 L379 286.7 L380.2 287.9 L381.4 289.1 L382.5 290.2 L383.6 291.2 L384.5 292.2 L385.5 293.1 L386.4 294 L387.2 294.9 L388 295.6 L388.7 296.4 L389.5 297.1 L390.1 297.8 L390.8 298.4 L391.3 299 L391.9 299.5 L392.5 300 L393 300.6 L393.4 301 L393.9 301.5 L394.3 301.9 L394.8 302.3 L395.2 302.7 L395.5 303.1 L395.9 303.5 L396.3 303.8 L396.6 304.2 L396.9 304.5 L397.2 304.8 L397.5 305 L397.7 305.3 L398 305.5 L398.2 305.7 L398.4 306 L398.6 306.2 L398.8 306.3 L399 306.5 L399.1 306.7 L399.3 306.8 L399.4 307 L399.5 307.1 L399.7 307.2 L399.8 307.3 L399.9 307.4 L400 307.5 L400 307.6 L400.1 307.6 L400.2 307.7 L400.2 307.8 L400.3 307.8 L400.4 307.9 L400.4 307.9 L400.5 308 L400.5 308 L400.6 308.1 L400.6 308.1 L400.6 308.2 L400.7 308.2 L400.7 308.3 L400.8 308.3 L400.8 308.4 L400.9 308.4 L400.9 308.5 L400.9 308.5 L401 308.5 L401 308.5 L401 308.6 L401.1 308.6 L401.1 308.6 L401.1 308.6 L401.1 308.6 L401.1 308.6 L401.1 308.7 L401.1 308.7 L401.1 308.7 L400.8 310.5 Z"/></clipPath></defs><g clip-path="url(#lclip)"><rect x="216" y="154" width="16" height="2" fill="url(#r0)"/><rect x="213" y="156" width="25" height="2" fill="url(#r1)"/><rect x="210" y="158" width="32" height="2" fill="url(#r2)"/><rect x="209" y="160" width="37" height="2" fill="url(#r3)"/><rect x="207" y="162" width="42" height="2" fill="url(#r4)"/><rect x="206" y="164" width="47" height="2" fill="url(#r5)"/><rect x="205" y="166" width="51" height="2" fill="url(#r6)"/><rect x="204" y="168" width="55" height="2" fill="url(#r7)"/><rect x="204" y="170" width="57" height="2" fill="url(#r8)"/><rect x="203" y="172" width="61" height="2" fill="url(#r9)"/><rect x="203" y="174" width="64" height="2" fill="url(#r10)"/><rect x="202" y="176" width="67" height="2" fill="url(#r11)"/><rect x="202" y="178" width="70" height="2" fill="url(#r12)"/><rect x="201" y="180" width="73" height="2" fill="url(#r13)"/><rect x="201" y="182" width="76" height="2" fill="url(#r14)"/><rect x="201" y="184" width="78" height="2" fill="url(#r15)"/><rect x="200" y="186" width="81" height="2" fill="url(#r16)"/><rect x="200" y="188" width="83" height="2" fill="url(#r17)"/><rect x="200" y="190" width="86" height="2" fill="url(#r18)"/><rect x="200" y="192" width="88" height="2" fill="url(#r19)"/><rect x="200" y="194" width="90" height="2" fill="url(#r20)"/><rect x="199" y="196" width="93" height="2" fill="url(#r21)"/><rect x="199" y="198" width="95" height="2" fill="url(#r22)"/><rect x="199" y="200" width="97" height="2" fill="url(#r23)"/><rect x="199" y="202" width="100" height="2" fill="url(#r24)"/><rect x="199" y="204" width="102" height="2" fill="url(#r25)"/><rect x="199" y="206" width="104" height="2" fill="url(#r26)"/><rect x="199" y="208" width="106" height="2" fill="url(#r27)"/><rect x="199" y="210" width="108" height="2" fill="url(#r28)"/><rect x="199" y="212" width="110" height="2" fill="url(#r29)"/><rect x="199" y="214" width="112" height="2" fill="url(#r30)"/><rect x="199" y="216" width="114" height="2" fill="url(#r31)"/><rect x="199" y="218" width="116" height="2" fill="url(#r32)"/><rect x="199" y="220" width="118" height="2" fill="url(#r33)"/><rect x="199" y="222" width="120" height="2" fill="url(#r34)"/><rect x="200" y="224" width="121" height="2" fill="url(#r35)"/><rect x="200" y="226" width="123" height="2" fill="url(#r36)"/><rect x="200" y="228" width="125" height="2" fill="url(#r37)"/><rect x="200" y="230" width="127" height="2" fill="url(#r38)"/><rect x="200" y="232" width="129" height="2" fill="url(#r39)"/><rect x="200" y="234" width="131" height="2" fill="url(#r40)"/><rect x="200" y="236" width="133" height="2" fill="url(#r41)"/><rect x="201" y="238" width="134" height="2" fill="url(#r42)"/><rect x="201" y="240" width="136" height="2" fill="url(#r43)"/><rect x="201" y="242" width="138" height="2" fill="url(#r44)"/><rect x="201" y="244" width="140" height="2" fill="url(#r45)"/><rect x="201" y="246" width="142" height="2" fill="url(#r46)"/><rect x="202" y="248" width="143" height="2" fill="url(#r47)"/><rect x="202" y="250" width="145" height="2" fill="url(#r48)"/><rect x="202" y="252" width="148" height="2" fill="url(#r49)"/><rect x="202" y="254" width="150" height="2" fill="url(#r50)"/><rect x="203" y="256" width="151" height="2" fill="url(#r51)"/><rect x="203" y="258" width="153" height="2" fill="url(#r52)"/><rect x="203" y="260" width="155" height="2" fill="url(#r53)"/><rect x="203" y="262" width="157" height="2" fill="url(#r54)"/><rect x="204" y="264" width="158" height="2" fill="url(#r55)"/><rect x="204" y="266" width="160" height="2" fill="url(#r56)"/><rect x="204" y="268" width="162" height="2" fill="url(#r57)"/><rect x="204" y="270" width="164" height="2" fill="url(#r58)"/><rect x="205" y="272" width="165" height="2" fill="url(#r59)"/><rect x="205" y="274" width="167" height="2" fill="url(#r60)"/><rect x="205" y="276" width="169" height="2" fill="url(#r61)"/><rect x="206" y="278" width="170" height="2" fill="url(#r62)"/><rect x="206" y="280" width="172" height="2" fill="url(#r63)"/><rect x="207" y="282" width="173" height="2" fill="url(#r64)"/><rect x="207" y="284" width="175" height="2" fill="url(#r65)"/><rect x="207" y="286" width="177" height="2" fill="url(#r66)"/><rect x="208" y="288" width="178" height="2" fill="url(#r67)"/><rect x="208" y="290" width="180" height="2" fill="url(#r68)"/><rect x="208" y="292" width="182" height="2" fill="url(#r69)"/><rect x="209" y="294" width="183" height="2" fill="url(#r70)"/><rect x="209" y="296" width="185" height="2" fill="url(#r71)"/><rect x="210" y="298" width="186" height="2" fill="url(#r72)"/><rect x="210" y="300" width="188" height="2" fill="url(#r73)"/><rect x="210" y="302" width="190" height="2" fill="url(#r74)"/><rect x="211" y="304" width="191" height="2" fill="url(#r75)"/><rect x="211" y="306" width="193" height="2" fill="url(#r76)"/><rect x="212" y="308" width="193" height="2" fill="url(#r77)"/><rect x="212" y="310" width="192" height="2" fill="url(#r78)"/><rect x="213" y="312" width="188" height="2" fill="url(#r79)"/><rect x="213" y="314" width="184" height="2" fill="url(#r80)"/><rect x="214" y="316" width="178" height="2" fill="url(#r81)"/><rect x="214" y="318" width="174" height="2" fill="url(#r82)"/><rect x="215" y="320" width="169" height="2" fill="url(#r83)"/><rect x="215" y="322" width="164" height="2" fill="url(#r84)"/><rect x="216" y="324" width="159" height="2" fill="url(#r85)"/><rect x="216" y="326" width="155" height="2" fill="url(#r86)"/><rect x="217" y="328" width="149" height="2" fill="url(#r87)"/><rect x="218" y="330" width="144" height="2" fill="url(#r88)"/><rect x="218" y="332" width="140" height="2" fill="url(#r89)"/><rect x="219" y="334" width="134" height="2" fill="url(#r90)"/><rect x="219" y="336" width="130" height="2" fill="url(#r91)"/><rect x="220" y="338" width="125" height="2" fill="url(#r92)"/><rect x="221" y="340" width="119" height="2" fill="url(#r93)"/><rect x="222" y="342" width="114" height="2" fill="url(#r94)"/><rect x="222" y="344" width="110" height="2" fill="url(#r95)"/><rect x="223" y="346" width="104" height="2" fill="url(#r96)"/><rect x="224" y="348" width="99" height="2" fill="url(#r97)"/><rect x="225" y="350" width="94" height="2" fill="url(#r98)"/><rect x="225" y="352" width="89" height="2" fill="url(#r99)"/><rect x="226" y="354" width="84" height="2" fill="url(#r100)"/><rect x="227" y="356" width="79" height="2" fill="url(#r101)"/><rect x="228" y="358" width="74" height="2" fill="url(#r102)"/><rect x="229" y="360" width="68" height="2" fill="url(#r103)"/><rect x="230" y="362" width="63" height="2" fill="url(#r104)"/><rect x="231" y="364" width="58" height="2" fill="url(#r105)"/><rect x="232" y="366" width="52" height="2" fill="url(#r106)"/><rect x="233" y="368" width="47" height="2" fill="url(#r107)"/><rect x="234" y="370" width="42" height="2" fill="url(#r108)"/><rect x="236" y="372" width="35" height="2" fill="url(#r109)"/><rect x="238" y="374" width="29" height="2" fill="url(#r110)"/><rect x="240" y="376" width="23" height="2" fill="url(#r111)"/><rect x="242" y="378" width="16" height="2" fill="url(#r112)"/><rect x="244" y="380" width="10" height="2" fill="url(#r113)"/></g><path d="M245.2 379L242.4 382.1M244.3 378.2L241.6 381.4M243.1 377.2L240.4 380.3M241.6 375.8L238.7 378.8M239.6 373.8L236.5 376.7M237.2 371L233.8 373.4M234 366L230.4 368.1M230.1 358.1L226.2 359.8M225.1 345.6L221.1 347.1M218.9 327.2L214.9 328.4M212.6 301.7L208.5 302.6M206.7 270L202.5 270.6M202.5 236L198.3 236.4M201.4 204.5L197.2 204.4M204.1 178.6L200 177.6M211.1 161.4L207.7 158.9M221.5 155L220.8 150.9M233 157.1L234.4 153.1M244.2 162.7L246.3 159M254.7 169.3L257 165.8M264.6 176.7L267.2 173.4M274.5 184.8L277.2 181.6M284.2 193.4L287 190.3M293.9 202.4L296.8 199.4M303.6 211.7L306.5 208.7M313.2 221.1L316.1 218.1M322.8 230.5L325.7 227.5M332.2 239.8L335.1 236.8M341.3 248.9L344.2 245.9M350 257.5L353 254.6M358.2 265.7L361.2 262.7M365.7 273.1L368.7 270.2M372.2 279.6L375.2 276.6M378 285.3L380.9 282.3M382.7 290L385.7 287M386.6 293.8L389.6 290.8M389.7 296.9L392.6 293.9M392.1 299.3L395.1 296.3M394.1 301.3L397.1 298.3M395.8 302.9L398.7 299.9M397.1 304.3L400 301.3M398.2 305.3L401.1 302.3M399 306.1L402 303.1M399.6 306.7L402.6 303.8M400.1 307.2L403 304.2M400.4 307.5L403.3 304.5M400.6 307.7L403.6 304.8M400.8 307.9L403.8 304.9M401 308.1L404 305.1" stroke="#707070" stroke-width="0.8" fill="none"/><g font-size="10" font-weight="bold" fill="#7e7e7e"><text x="221.4" y="149.7" text-anchor="middle">520</text><text x="277.6" y="172.8" text-anchor="middle">540</text><text x="318.3" y="208.3" text-anchor="middle">560</text><text x="356.5" y="246.2" text-anchor="middle">580</text><text x="387.5" y="277.5" text-anchor="middle">600</text><text x="404.5" y="294.7" text-anchor="middle">620</text><text x="189.3" y="240.2" text-anchor="middle">500</text><text x="212.4" y="353" text-anchor="middle">480</text><text x="228.2" y="381.9" text-anchor="middle">460</text></g><path d="M266.3 314 L268.5 310.6 L271.7 305.8 L274.9 301.3 L277.9 297.6 L280.9 294 L283.9 290.8 L286.9 287.8 L289.8 285.1 L292.8 282.6 L295.8 280.2 L298.8 277.9 L301.8 275.9 L304.8 274.2 L307.7 272.7 L310.7 271.4 L313.6 270.3 L316.4 269.3 L319.7 268.4 L323.7 267.5 L328.1 266.7 L332.2 266.2 L335.6 266.1 L338.5 266.3 L341.4 266.7 L344.1 267.2 L346.7 267.9 L349.4 268.8 L352.5 270.1 L355.7 271.7 L358.6 273.3 L361 274.8 L363.1 276.3 L365.4 277.9 L368.1 279.7 L370.8 281.7 L373.5 283.7 L375.9 285.6 L378.2 287.6 L380.3 289.4 L382.5 291.2 L384.6 292.8 L386 294" stroke="#787878" stroke-width="0.9" fill="none"/><path d="M250 185.4L388.9 297.8L239.6 355.8Z" stroke="#f29a34" stroke-width="1.5" fill="none"/><circle cx="250" cy="185.4" r="3.6" fill="#f00" stroke="#fff" stroke-width="1.2"/><circle cx="239.6" cy="355.8" r="3.6" fill="#f00" stroke="#fff" stroke-width="1.2"/><circle cx="388.9" cy="297.8" r="3.6" fill="#f00" stroke="#fff" stroke-width="1.2"/></svg>
</body></html>
